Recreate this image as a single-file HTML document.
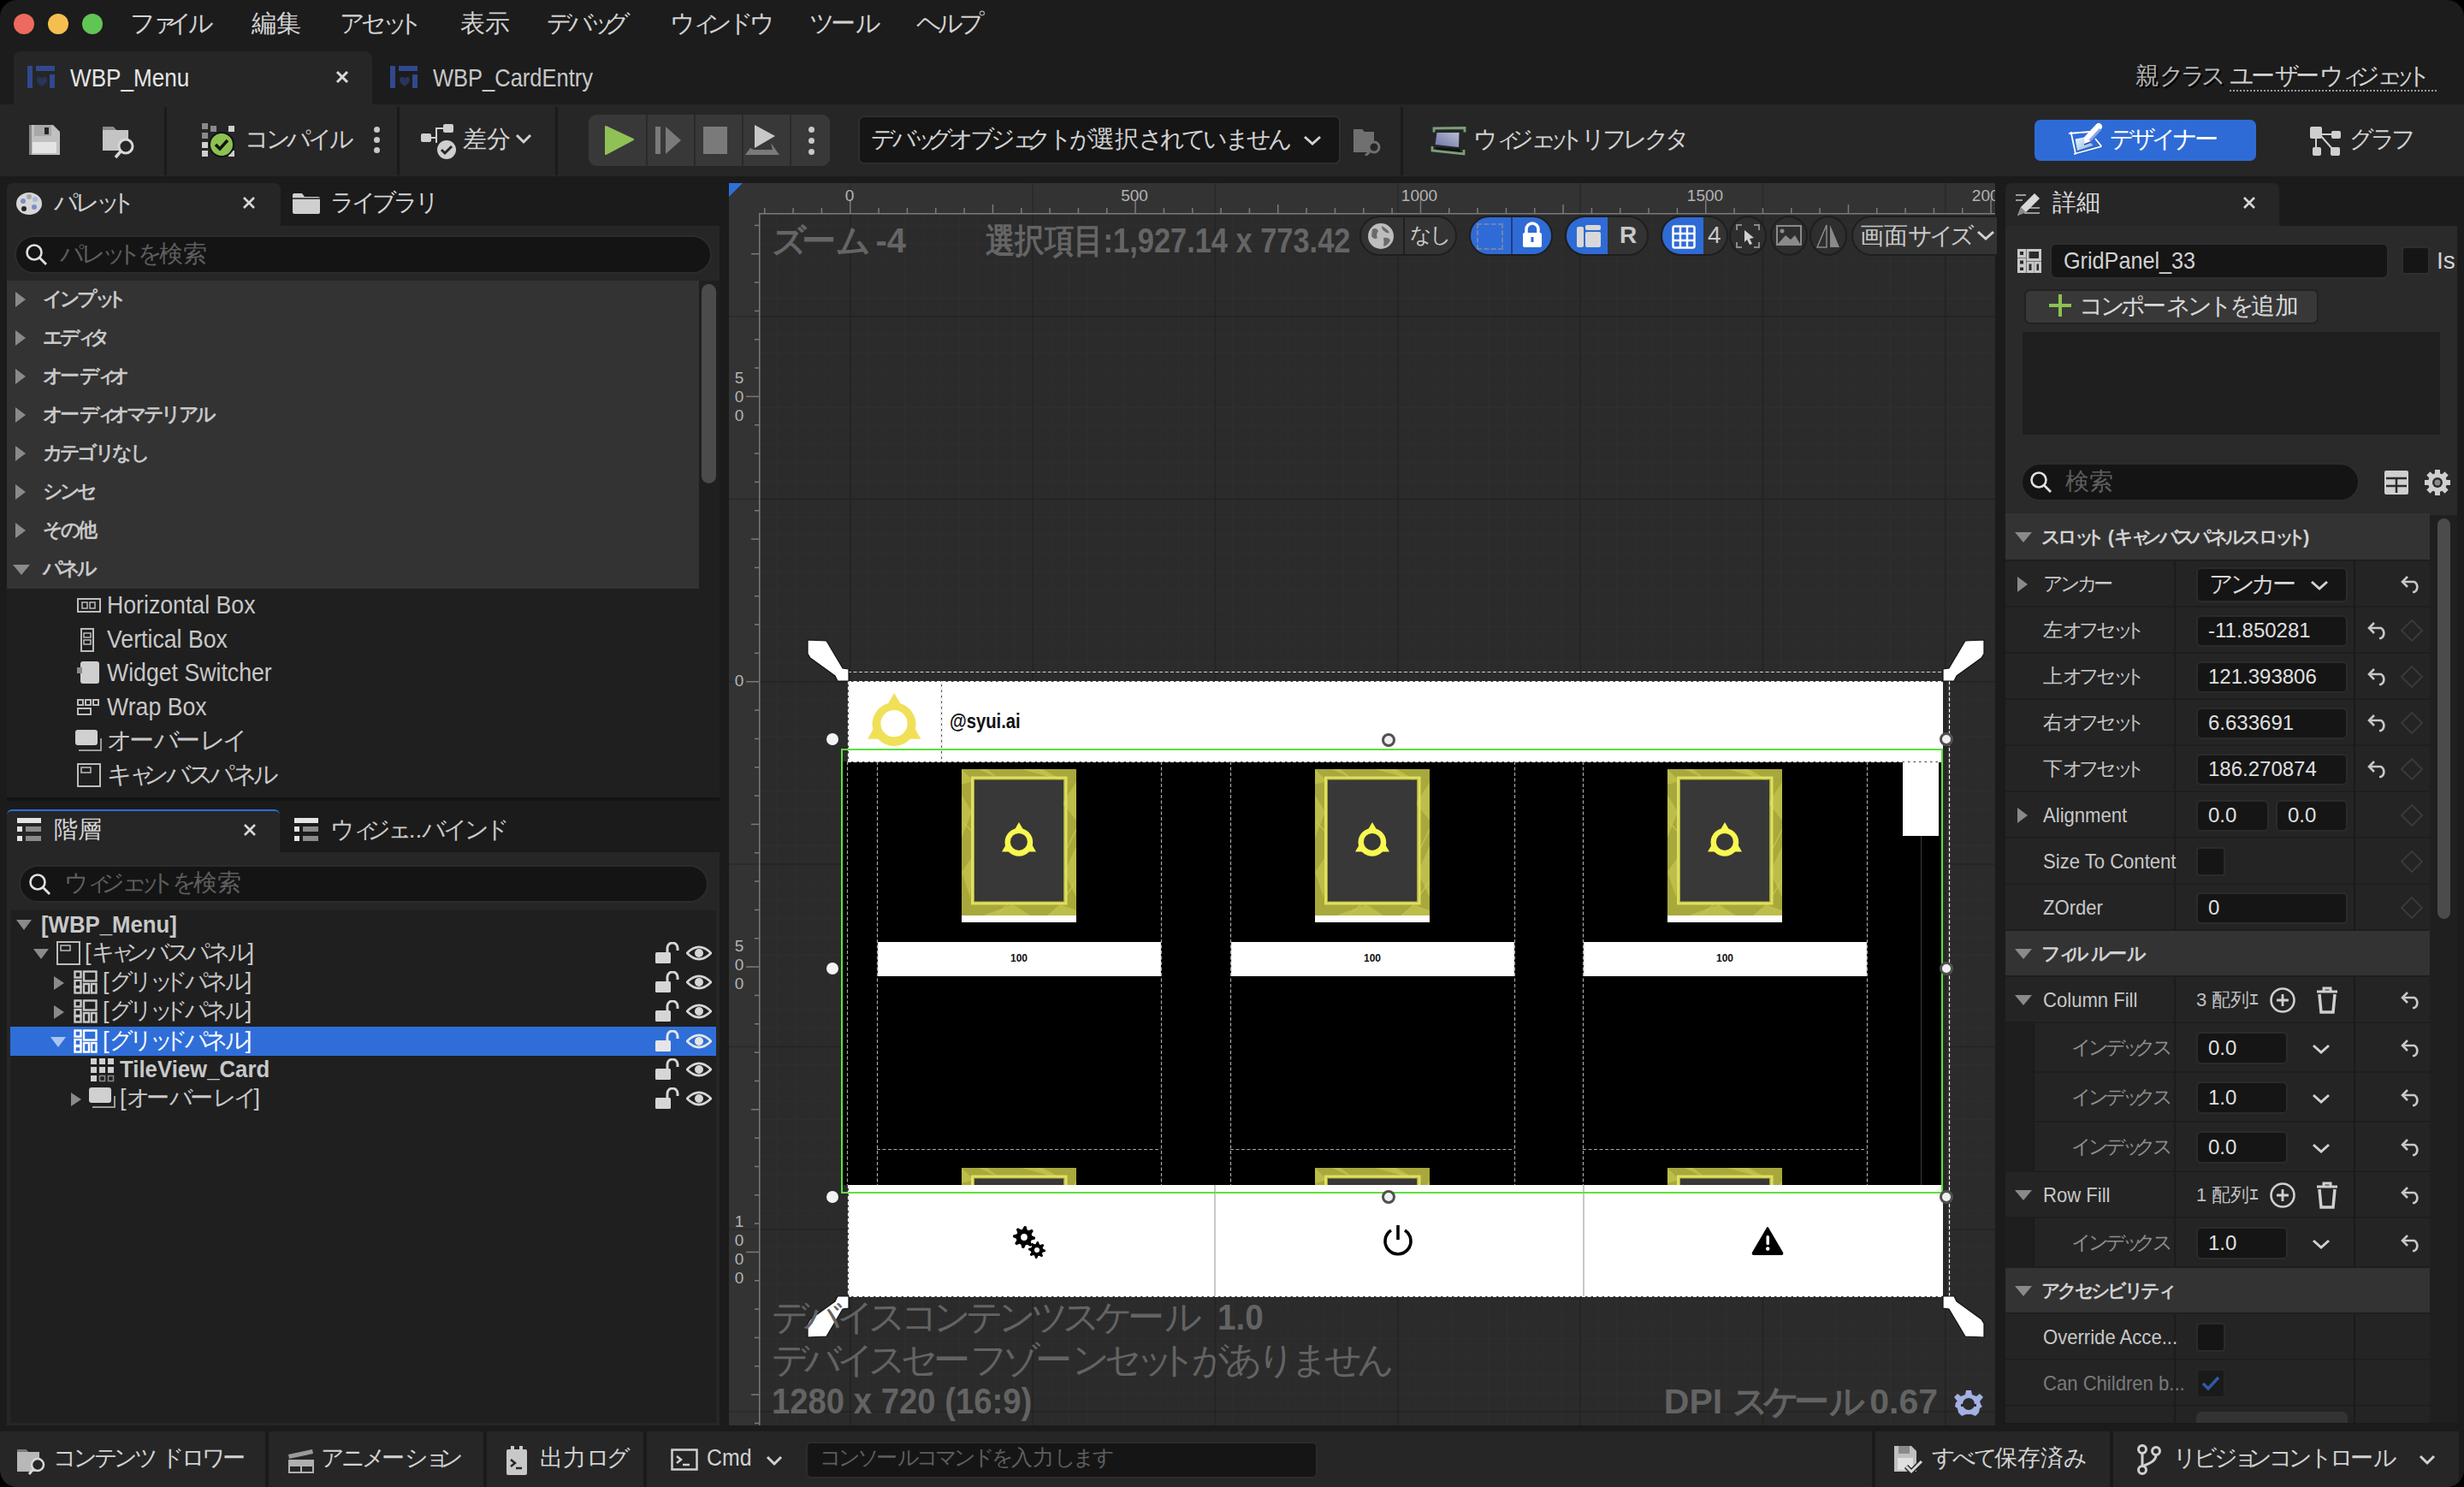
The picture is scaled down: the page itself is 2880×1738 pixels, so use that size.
<!DOCTYPE html><html><head><meta charset="utf-8"><style>
html,body{margin:0;padding:0;}
body{width:2880px;height:1738px;overflow:hidden;position:relative;background:#1b1b1b;font-family:"Liberation Sans",sans-serif;}
div,svg{position:absolute;box-sizing:border-box;}
.t{white-space:nowrap;line-height:1.1;}
.t i{display:inline-block;font-style:normal;text-align:center;}
i.k{width:.88em}i.s{width:.62em}i.h{width:1em}i.g{width:.9em}i.p{width:.5em}
</style></head><body>
<div style="left:0px;top:0px;width:2880px;height:122px;background:#1c1c1c;"></div>
<div style="left:16px;top:16px;width:24px;height:24px;background:#ed6a5e;border-radius:50%;"></div>
<div style="left:56px;top:16px;width:24px;height:24px;background:#f5bf4f;border-radius:50%;"></div>
<div style="left:96px;top:16px;width:24px;height:24px;background:#61c554;border-radius:50%;"></div>
<div class="t" style="left:152px;top:12.3px;font-size:28.5px;color:#d2d2d2;font-weight:400;"><i class="k">フ</i><i class="s">ァ</i><i class="k">イ</i><i class="k">ル</i></div>
<div class="t" style="left:294px;top:12.3px;font-size:28.5px;color:#d2d2d2;font-weight:400;"><i class="h">編</i><i class="h">集</i></div>
<div class="t" style="left:397px;top:12.3px;font-size:28.5px;color:#d2d2d2;font-weight:400;"><i class="k">ア</i><i class="k">セ</i><i class="s">ッ</i><i class="k">ト</i></div>
<div class="t" style="left:538px;top:12.3px;font-size:28.5px;color:#d2d2d2;font-weight:400;"><i class="h">表</i><i class="h">示</i></div>
<div class="t" style="left:639px;top:12.3px;font-size:28.5px;color:#d2d2d2;font-weight:400;"><i class="k">デ</i><i class="k">バ</i><i class="s">ッ</i><i class="k">グ</i></div>
<div class="t" style="left:783px;top:12.3px;font-size:28.5px;color:#d2d2d2;font-weight:400;"><i class="k">ウ</i><i class="s">ィ</i><i class="k">ン</i><i class="k">ド</i><i class="k">ウ</i></div>
<div class="t" style="left:946px;top:12.3px;font-size:28.5px;color:#d2d2d2;font-weight:400;"><i class="k">ツ</i><i class="h">ー</i><i class="k">ル</i></div>
<div class="t" style="left:1071px;top:12.3px;font-size:28.5px;color:#d2d2d2;font-weight:400;"><i class="k">ヘ</i><i class="k">ル</i><i class="k">プ</i></div>
<div style="left:16px;top:60px;width:419px;height:62px;background:#262626;border-radius:8px 8px 0 0;"></div>
<svg style="left:32px;top:77px;" width="34" height="28" viewBox="0 0 34 28"><rect x="0" y="0" width="6" height="26" fill="#30488e"/><rect x="10" y="0" width="22" height="6" fill="#30488e"/><rect x="26" y="10" width="6" height="16" fill="#30488e"/><path d="M11 17 q0 -4 3 -4 q3 0 3 3 q0 -3 3 -3 q3 0 3 4 q0 3 -6 7 q-6 -4 -6 -7z" fill="#28355a"/></svg>
<div class="t" style="left:82px;top:73.5px;font-size:30px;color:#e6e6e6;font-weight:400;transform:scaleX(0.87);transform-origin:left;">WBP_Menu</div>
<svg style="left:391px;top:81px;" width="18" height="18" viewBox="0 0 18 18"><path d="M3 3 L15 15 M15 3 L3 15" stroke="#d8d8d8" stroke-width="3"/></svg>
<svg style="left:456px;top:77px;" width="34" height="28" viewBox="0 0 34 28"><rect x="0" y="0" width="6" height="26" fill="#30488e"/><rect x="10" y="0" width="22" height="6" fill="#30488e"/><rect x="26" y="10" width="6" height="16" fill="#30488e"/><path d="M11 17 q0 -4 3 -4 q3 0 3 3 q0 -3 3 -3 q3 0 3 4 q0 3 -6 7 q-6 -4 -6 -7z" fill="#28355a"/></svg>
<div class="t" style="left:506px;top:73.5px;font-size:30px;color:#c8c8c8;font-weight:400;transform:scaleX(0.85);transform-origin:left;">WBP_CardEntry</div>
<div class="t" style="left:2496px;top:73.6px;font-size:28px;color:#b4b4b4;font-weight:400;text-shadow:2px 2px 1px #000;"><i class="h">親</i><i class="k">ク</i><i class="k">ラ</i><i class="k">ス</i></div>
<div class="t" style="left:2606px;top:73.6px;font-size:28px;color:#d2d2d2;font-weight:400;"><i class="k">ユ</i><i class="h">ー</i><i class="k">ザ</i><i class="h">ー</i><i class="k">ウ</i><i class="s">ィ</i><i class="k">ジ</i><i class="s">ェ</i><i class="s">ッ</i><i class="k">ト</i></div>
<div style="left:2606px;top:105px;width:242px;height:2px;border-top:2px dotted #9a9a9a;"></div>
<div style="left:0px;top:122px;width:2880px;height:84px;background:#262626;"></div>
<svg style="left:34px;top:146px;" width="36" height="35" viewBox="0 0 36 35"><path d="M0 0 H28 L36 8 V35 H0 Z" fill="#c0c0c0"/><rect x="4" y="20" width="28" height="13" fill="#e4e4e4"/><rect x="6" y="0" width="20" height="13" fill="#a8a8a8"/><rect x="18" y="3" width="5" height="8" fill="#262626"/><rect x="0" y="0" width="3" height="35" fill="#888"/></svg>
<svg style="left:120px;top:144px;" width="40" height="42" viewBox="0 0 40 42"><path d="M0 4 H12 L16 8 H30 V32 H0 Z" fill="#c4c4c4"/><path d="M0 4 H12 L16 8 H0Z" fill="#8a8a8a"/><circle cx="27" cy="27" r="8" fill="#262626" stroke="#d8d8d8" stroke-width="3"/><path d="M21 33 L15 40" stroke="#d8d8d8" stroke-width="3.5"/></svg>
<div style="left:192px;top:125px;width:3px;height:80px;background:#1a1a1a;"></div>
<div style="left:464px;top:125px;width:3px;height:80px;background:#1a1a1a;"></div>
<div style="left:649px;top:125px;width:3px;height:80px;background:#1a1a1a;"></div>
<div style="left:1637px;top:125px;width:3px;height:80px;background:#1a1a1a;"></div>
<svg style="left:236px;top:144px;" width="42" height="42" viewBox="0 0 42 42"><g fill="#cfcfcf"><rect x="0" y="0" width="7" height="7" fill="#8a8a8a"/><rect x="10" y="3" width="7" height="7" fill="#8a8a8a"/><rect x="31" y="3" width="7" height="7"/><rect x="0" y="11" width="7" height="7" fill="#8a8a8a"/><rect x="0" y="22" width="7" height="7"/><rect x="0" y="32" width="7" height="7"/><rect x="31" y="32" width="7" height="7"/></g><circle cx="23" cy="25" r="14" fill="#8cc152" stroke="#111" stroke-width="2"/><path d="M16 25 L21 30 L30 20" stroke="#111" stroke-width="3.5" fill="none"/></svg>
<div class="t" style="left:286px;top:147.6px;font-size:28px;color:#d2d2d2;font-weight:400;"><i class="k">コ</i><i class="k">ン</i><i class="k">パ</i><i class="k">イ</i><i class="k">ル</i></div>
<div style="left:437px;top:148px;width:7px;height:7px;background:#c8c8c8;border-radius:50%;"></div>
<div style="left:437px;top:160px;width:7px;height:7px;background:#c8c8c8;border-radius:50%;"></div>
<div style="left:437px;top:172px;width:7px;height:7px;background:#c8c8c8;border-radius:50%;"></div>
<svg style="left:492px;top:145px;" width="42" height="42" viewBox="0 0 42 42"><rect x="0" y="11" width="12" height="10" rx="2" fill="#cfcfcf"/><rect x="26" y="0" width="12" height="10" rx="2" fill="#cfcfcf"/><path d="M12 16 H18 V5 H26 M18 16 V22" stroke="#cfcfcf" stroke-width="2" fill="none"/><circle cx="30" cy="30" r="11" fill="#cfcfcf"/><path d="M24 30 L28 34 L36 26" stroke="#262626" stroke-width="3" fill="none"/></svg>
<div class="t" style="left:541px;top:147.6px;font-size:28px;color:#d2d2d2;font-weight:400;"><i class="h">差</i><i class="h">分</i></div>
<svg style="left:602px;top:155px;" width="20" height="14" viewBox="0 0 20 14"><path d="M2 3 L10 11 L18 3" stroke="#d2d2d2" stroke-width="3" fill="none"/></svg>
<div style="left:688px;top:134px;width:282px;height:60px;background:#383838;border-radius:9px;"></div>
<div style="left:755px;top:134px;width:2px;height:60px;background:#2a2a2a;"></div>
<div style="left:811px;top:134px;width:2px;height:60px;background:#2a2a2a;"></div>
<div style="left:867px;top:134px;width:2px;height:60px;background:#2a2a2a;"></div>
<div style="left:923px;top:134px;width:2px;height:60px;background:#2a2a2a;"></div>
<svg style="left:707px;top:146px;" width="34" height="36" viewBox="0 0 34 36"><path d="M1 2 L33 17 L1 34 Z" fill="#8fc157" stroke="#8fc157" stroke-width="2" stroke-linejoin="round"/></svg>
<svg style="left:765px;top:147px;" width="34" height="34" viewBox="0 0 34 34"><rect x="1" y="1" width="6" height="32" fill="#7a7a7a"/><path d="M13 1 L31 17 L13 33Z" fill="#7a7a7a"/></svg>
<div style="left:822px;top:148px;width:28px;height:32px;background:#7a7a7a;"></div>
<svg style="left:871px;top:145px;" width="44" height="40" viewBox="0 0 44 40"><path d="M11 1 L35 14 L11 28Z" fill="#c8c8c8"/><path d="M6 28 L0 36 H40 L30 22 L32 30 H10Z" fill="#7a7a7a"/></svg>
<div style="left:945px;top:148px;width:7px;height:7px;background:#c8c8c8;border-radius:50%;"></div>
<div style="left:945px;top:161px;width:7px;height:7px;background:#c8c8c8;border-radius:50%;"></div>
<div style="left:945px;top:174px;width:7px;height:7px;background:#c8c8c8;border-radius:50%;"></div>
<div style="left:1003px;top:135px;width:564px;height:57px;background:#151515;border:2px solid #2e2e2e;border-radius:7px;"></div>
<div class="t" style="left:1018px;top:147.6px;font-size:28px;color:#d2d2d2;font-weight:400;"><i class="k">デ</i><i class="k">バ</i><i class="s">ッ</i><i class="k">グ</i><i class="k">オ</i><i class="k">ブ</i><i class="k">ジ</i><i class="s">ェ</i><i class="k">ク</i><i class="k">ト</i><i class="g">が</i><i class="h">選</i><i class="h">択</i><i class="g">さ</i><i class="g">れ</i><i class="g">て</i><i class="g">い</i><i class="g">ま</i><i class="g">せ</i><i class="g">ん</i></div>
<svg style="left:1523px;top:157px;" width="22" height="14" viewBox="0 0 22 14"><path d="M2 3 L11 11 L20 3" stroke="#d2d2d2" stroke-width="3" fill="none"/></svg>
<svg style="left:1582px;top:148px;" width="34" height="34" viewBox="0 0 34 34"><path d="M0 3 H10 L13 6 H24 V30 H0Z" fill="#707070"/><circle cx="24" cy="24" r="6" fill="#262626" stroke="#707070" stroke-width="3"/><path d="M19 29 L14 34" stroke="#707070" stroke-width="3"/></svg>
<svg style="left:1670px;top:145px;" width="46" height="40" viewBox="0 0 46 40"><defs><linearGradient id="rg" x1="0" y1="1" x2="1" y2="0"><stop offset="0" stop-color="#6c74a8"/><stop offset="1" stop-color="#b8bcd0"/></linearGradient></defs><path d="M9 27 L36 29 L37 33 L8 32Z" fill="#111"/><path d="M6 9.5 V5 L42 4.5 V9.5" fill="none" stroke="#7a9e78" stroke-width="2.8"/><path d="M9.5 10 L35.5 10 L35 27 L7.5 24Z" fill="url(#rg)"/><path d="M4 26 V31 L41 35 V30" fill="none" stroke="#7a9e78" stroke-width="2.8"/></svg>
<div class="t" style="left:1722px;top:147.6px;font-size:28px;color:#d2d2d2;font-weight:400;"><i class="k">ウ</i><i class="s">ィ</i><i class="k">ジ</i><i class="s">ェ</i><i class="s">ッ</i><i class="k">ト</i><i class="k">リ</i><i class="k">フ</i><i class="k">レ</i><i class="k">ク</i><i class="k">タ</i></div>
<div style="left:2378px;top:140px;width:259px;height:48px;background:#2f6bd6;border-radius:7px;"></div>
<svg style="left:2414px;top:143px;" width="46" height="42" viewBox="0 0 46 42"><defs><linearGradient id="dg" x1="0" y1="0" x2="1" y2="1"><stop offset="0" stop-color="#e8fbff"/><stop offset="1" stop-color="#8fb0e0"/></linearGradient></defs><path d="M14 36 L42 28 L36 19" fill="none" stroke="#1f4fa0" stroke-width="3" opacity="0.6"/><path d="M4 13 L29 11 M6.5 11 L12.2 37.5 M10 37 L42.4 28.1 M35 19 L42.4 28.1" fill="none" stroke="#ffffff" stroke-width="1.8"/><path d="M11.6 19.6 L24 17 L32.5 27 L14 33Z" fill="url(#dg)"/><path d="M26 19 L39 5" stroke="#ffffff" stroke-width="8" stroke-linecap="round"/><path d="M28.5 21.5 L41 8" stroke="#8aa4e8" stroke-width="3"/><path d="M22 26 L23 18 L30 23Z" fill="#ffffff"/><path d="M22 26 L30 23" stroke="#3040a0" stroke-width="1.5"/></svg>
<div class="t" style="left:2466px;top:147.6px;font-size:28px;color:#ffffff;font-weight:400;"><i class="k">デ</i><i class="k">ザ</i><i class="k">イ</i><i class="k">ナ</i><i class="h">ー</i></div>
<svg style="left:2700px;top:148px;" width="36" height="34" viewBox="0 0 36 34"><rect x="0" y="0" width="14" height="14" rx="2" fill="#cfcfcf"/><rect x="25" y="5" width="11" height="9" rx="2" fill="#cfcfcf"/><rect x="3" y="24" width="10" height="10" rx="2" fill="#cfcfcf"/><rect x="24" y="24" width="11" height="10" rx="2" fill="#cfcfcf"/><path d="M7 14 V26 M12 10 L27 27 M14 9 H26" stroke="#cfcfcf" stroke-width="2"/></svg>
<div class="t" style="left:2746px;top:147.6px;font-size:28px;color:#d2d2d2;font-weight:400;"><i class="k">グ</i><i class="k">ラ</i><i class="k">フ</i></div>
<div style="left:0px;top:206px;width:2880px;height:1532px;background:#1b1b1b;"></div>
<div style="left:8px;top:214px;width:320px;height:50px;background:#262626;border-radius:7px 7px 0 0;"></div>
<svg style="left:18px;top:222px;" width="34" height="32" viewBox="0 0 34 32"><ellipse cx="16" cy="16" rx="15" ry="13" fill="#d6d6d6"/><circle cx="9" cy="13" r="3" fill="#7a8fc4"/><circle cx="16" cy="8" r="3" fill="#a8a8a8"/><circle cx="23" cy="11" r="3" fill="#a8b8e0"/><circle cx="22" cy="20" r="3" fill="#7a8fc4"/><circle cx="10" cy="22" r="3" fill="#262626"/></svg>
<div class="t" style="left:63px;top:221.6px;font-size:28px;color:#d2d2d2;font-weight:400;"><i class="k">パ</i><i class="k">レ</i><i class="s">ッ</i><i class="k">ト</i></div>
<svg style="left:283px;top:229px;" width="16" height="16" viewBox="0 0 16 16"><path d="M2 2 L14 14 M14 2 L2 14" stroke="#d8d8d8" stroke-width="2.6"/></svg>
<svg style="left:342px;top:226px;" width="32" height="24" viewBox="0 0 32 24"><path d="M0 2 Q0 0 2 0 H11 L14 4 H30 Q32 4 32 6 V22 Q32 24 30 24 H2 Q0 24 0 22Z" fill="#cfcfcf"/><path d="M0 6 H32" stroke="#1c1c1c" stroke-width="1.5"/></svg>
<div class="t" style="left:386px;top:221.6px;font-size:28px;color:#d2d2d2;font-weight:400;"><i class="k">ラ</i><i class="k">イ</i><i class="k">ブ</i><i class="k">ラ</i><i class="k">リ</i></div>
<div style="left:8px;top:264px;width:833px;height:64px;background:#262626;"></div>
<div style="left:17px;top:275px;width:815px;height:45px;background:#141414;border:2px solid #2c2c2c;border-radius:23px;"></div>
<svg style="left:29px;top:284px;" width="27" height="27" viewBox="0 0 27 27"><circle cx="11" cy="11" r="8.5" fill="none" stroke="#e0e0e0" stroke-width="2.6"/><path d="M17 17 L25 25" stroke="#e0e0e0" stroke-width="2.8"/></svg>
<div class="t" style="left:70px;top:281.6px;font-size:28px;color:#5e5e5e;font-weight:400;"><i class="k">パ</i><i class="k">レ</i><i class="s">ッ</i><i class="k">ト</i><i class="g">を</i><i class="h">検</i><i class="h">索</i></div>
<div style="left:8px;top:328px;width:809px;height:360px;background:#333333;"></div>
<div style="left:817px;top:328px;width:24px;height:360px;background:#1f1f1f;"></div>
<div style="left:820px;top:332px;width:17px;height:233px;background:#4b4b4b;border-radius:9px;"></div>
<svg style="left:17px;top:340px;" width="14" height="20" viewBox="0 0 14 20"><path d="M1 1 L13 10 L1 19Z" fill="#8a8a8a"/></svg>
<div class="t" style="left:50px;top:337.4px;font-size:23px;color:#c8c8c8;font-weight:700;"><i class="k">イ</i><i class="k">ン</i><i class="k">プ</i><i class="s">ッ</i><i class="k">ト</i></div>
<svg style="left:17px;top:385px;" width="14" height="20" viewBox="0 0 14 20"><path d="M1 1 L13 10 L1 19Z" fill="#8a8a8a"/></svg>
<div class="t" style="left:50px;top:382.4px;font-size:23px;color:#c8c8c8;font-weight:700;"><i class="k">エ</i><i class="k">デ</i><i class="s">ィ</i><i class="k">タ</i></div>
<svg style="left:17px;top:430px;" width="14" height="20" viewBox="0 0 14 20"><path d="M1 1 L13 10 L1 19Z" fill="#8a8a8a"/></svg>
<div class="t" style="left:50px;top:427.4px;font-size:23px;color:#c8c8c8;font-weight:700;"><i class="k">オ</i><i class="h">ー</i><i class="k">デ</i><i class="s">ィ</i><i class="k">オ</i></div>
<svg style="left:17px;top:475px;" width="14" height="20" viewBox="0 0 14 20"><path d="M1 1 L13 10 L1 19Z" fill="#8a8a8a"/></svg>
<div class="t" style="left:50px;top:472.4px;font-size:23px;color:#c8c8c8;font-weight:700;"><i class="k">オ</i><i class="h">ー</i><i class="k">デ</i><i class="s">ィ</i><i class="k">オ</i><i class="k">マ</i><i class="k">テ</i><i class="k">リ</i><i class="k">ア</i><i class="k">ル</i></div>
<svg style="left:17px;top:520px;" width="14" height="20" viewBox="0 0 14 20"><path d="M1 1 L13 10 L1 19Z" fill="#8a8a8a"/></svg>
<div class="t" style="left:50px;top:517.4px;font-size:23px;color:#c8c8c8;font-weight:700;"><i class="k">カ</i><i class="k">テ</i><i class="k">ゴ</i><i class="k">リ</i><i class="g">な</i><i class="g">し</i></div>
<svg style="left:17px;top:565px;" width="14" height="20" viewBox="0 0 14 20"><path d="M1 1 L13 10 L1 19Z" fill="#8a8a8a"/></svg>
<div class="t" style="left:50px;top:562.4px;font-size:23px;color:#c8c8c8;font-weight:700;"><i class="k">シ</i><i class="k">ン</i><i class="k">セ</i></div>
<svg style="left:17px;top:610px;" width="14" height="20" viewBox="0 0 14 20"><path d="M1 1 L13 10 L1 19Z" fill="#8a8a8a"/></svg>
<div class="t" style="left:50px;top:607.4px;font-size:23px;color:#c8c8c8;font-weight:700;"><i class="g">そ</i><i class="g">の</i><i class="h">他</i></div>
<svg style="left:14px;top:659px;" width="22" height="14" viewBox="0 0 22 14"><path d="M1 1 H21 L11 13Z" fill="#8a8a8a"/></svg>
<div class="t" style="left:50px;top:652.4px;font-size:23px;color:#c8c8c8;font-weight:700;"><i class="k">パ</i><i class="k">ネ</i><i class="k">ル</i></div>
<div style="left:8px;top:688px;width:833px;height:247px;background:#1f1f1f;"></div>
<svg style="left:90px;top:699.0px;" width="28" height="18" viewBox="0 0 28 18"><rect x="1" y="1" width="26" height="15" fill="none" stroke="#bdbdbd" stroke-width="2"/><rect x="6" y="5" width="6" height="7" fill="none" stroke="#bdbdbd" stroke-width="1.5"/><rect x="15" y="5" width="6" height="7" fill="none" stroke="#bdbdbd" stroke-width="1.5"/></svg>
<div class="t" style="left:125px;top:692.0px;font-size:29px;color:#c8c8c8;font-weight:400;transform:scaleX(0.92);transform-origin:left;">Horizontal Box</div>
<svg style="left:94px;top:733.6px;" width="18" height="28" viewBox="0 0 18 28"><rect x="1" y="1" width="14" height="26" fill="none" stroke="#bdbdbd" stroke-width="2"/><rect x="4" y="6" width="8" height="5" fill="none" stroke="#bdbdbd" stroke-width="1.5"/><rect x="4" y="14" width="8" height="5" fill="none" stroke="#bdbdbd" stroke-width="1.5"/></svg>
<div class="t" style="left:125px;top:731.6px;font-size:29px;color:#c8c8c8;font-weight:400;transform:scaleX(0.92);transform-origin:left;">Vertical Box</div>
<svg style="left:90px;top:773.2px;" width="28" height="27" viewBox="0 0 28 27"><rect x="4" y="0" width="22" height="26" rx="3" fill="#cfcfcf"/><rect x="0" y="7" width="6" height="7" fill="#8a8a8a"/></svg>
<div class="t" style="left:125px;top:771.2px;font-size:29px;color:#c8c8c8;font-weight:400;transform:scaleX(0.92);transform-origin:left;">Widget Switcher</div>
<svg style="left:90px;top:816.8px;" width="28" height="20" viewBox="0 0 28 20"><g fill="none" stroke="#bdbdbd" stroke-width="2"><rect x="1" y="1" width="6" height="6"/><rect x="10" y="1" width="6" height="6"/><rect x="19" y="1" width="6" height="6"/><rect x="1" y="11" width="15" height="7"/></g></svg>
<div class="t" style="left:125px;top:810.8px;font-size:29px;color:#c8c8c8;font-weight:400;transform:scaleX(0.92);transform-origin:left;">Wrap Box</div>
<svg style="left:88px;top:853.4px;" width="32" height="28" viewBox="0 0 32 28"><rect x="0" y="0" width="26" height="18" rx="3" fill="#d0d0d0"/><path d="M4 24 H30 V10" fill="none" stroke="#9a9a9a" stroke-width="2"/></svg>
<div class="t" style="left:125px;top:850.4px;font-size:29px;color:#c8c8c8;font-weight:400;"><i class="k">オ</i><i class="h">ー</i><i class="k">バ</i><i class="h">ー</i><i class="k">レ</i><i class="k">イ</i></div>
<svg style="left:90px;top:892.0px;" width="28" height="28" viewBox="0 0 28 28"><rect x="1" y="1" width="26" height="26" fill="none" stroke="#bdbdbd" stroke-width="2"/><rect x="5" y="5" width="11" height="6" fill="none" stroke="#bdbdbd" stroke-width="1.5"/></svg>
<div class="t" style="left:125px;top:890.0px;font-size:29px;color:#c8c8c8;font-weight:400;"><i class="k">キ</i><i class="s">ャ</i><i class="k">ン</i><i class="k">バ</i><i class="k">ス</i><i class="k">パ</i><i class="k">ネ</i><i class="k">ル</i></div>
<div style="left:8px;top:925px;width:833px;height:10px;background:#1f1f1f;"></div>
<div style="left:8px;top:932px;width:833px;height:4px;background:#141414;"></div>
<div style="left:8px;top:946px;width:319px;height:50px;background:#262626;border-radius:6px 6px 0 0;border-top:2px solid #2f6bd6;"></div>
<svg style="left:20px;top:956px;" width="28" height="28" viewBox="0 0 28 28"><rect x="0" y="0" width="28" height="6" fill="#e4e4e4"/><rect x="0" y="10" width="6" height="6" fill="#e4e4e4"/><rect x="10" y="10" width="18" height="6" fill="#8a8a8a"/><rect x="0" y="21" width="6" height="6" fill="#e4e4e4"/><rect x="10" y="21" width="18" height="6" fill="#8a8a8a"/></svg>
<div class="t" style="left:63px;top:954.6px;font-size:28px;color:#d8d8d8;font-weight:400;"><i class="h">階</i><i class="h">層</i></div>
<svg style="left:284px;top:962px;" width="16" height="16" viewBox="0 0 16 16"><path d="M2 2 L14 14 M14 2 L2 14" stroke="#d8d8d8" stroke-width="2.6"/></svg>
<svg style="left:344px;top:956px;" width="28" height="28" viewBox="0 0 28 28"><rect x="0" y="0" width="28" height="6" fill="#e4e4e4"/><rect x="0" y="10" width="6" height="6" fill="#e4e4e4"/><rect x="10" y="10" width="18" height="6" fill="#8a8a8a"/><rect x="0" y="21" width="6" height="6" fill="#e4e4e4"/><rect x="10" y="21" width="18" height="6" fill="#8a8a8a"/></svg>
<div class="t" style="left:386px;top:954.6px;font-size:28px;color:#c8c8c8;font-weight:400;"><i class="k">ウ</i><i class="s">ィ</i><i class="k">ジ</i><i class="s">ェ</i>...<i class="k">バ</i><i class="k">イ</i><i class="k">ン</i><i class="k">ド</i></div>
<div style="left:8px;top:996px;width:833px;height:66px;background:#262626;"></div>
<div style="left:22px;top:1011px;width:806px;height:44px;background:#141414;border:2px solid #2c2c2c;border-radius:22px;"></div>
<svg style="left:33px;top:1020px;" width="27" height="27" viewBox="0 0 27 27"><circle cx="11" cy="11" r="8.5" fill="none" stroke="#e0e0e0" stroke-width="2.6"/><path d="M17 17 L25 25" stroke="#e0e0e0" stroke-width="2.8"/></svg>
<div class="t" style="left:75px;top:1016.6px;font-size:28px;color:#5e5e5e;font-weight:400;"><i class="k">ウ</i><i class="s">ィ</i><i class="k">ジ</i><i class="s">ェ</i><i class="s">ッ</i><i class="k">ト</i><i class="g">を</i><i class="h">検</i><i class="h">索</i></div>
<div style="left:8px;top:1062px;width:833px;height:604px;background:#262626;"></div>
<div style="left:12px;top:1064px;width:825px;height:599px;background:#1f1f1f;"></div>
<div style="left:12px;top:1200px;width:825px;height:34px;background:#2f6ed9;"></div>
<svg style="left:18px;top:1074px;" width="20" height="14" viewBox="0 0 20 14"><path d="M1 1 H19 L10 13Z" fill="#8a8a8a"/></svg>
<div class="t" style="left:48px;top:1065.6px;font-size:28px;color:#c8c8c8;font-weight:700;transform:scaleX(0.92);transform-origin:left;">[WBP_Menu]</div>
<svg style="left:38px;top:1108px;" width="20" height="14" viewBox="0 0 20 14"><path d="M1 1 H19 L10 13Z" fill="#8a8a8a"/></svg>
<svg style="left:66px;top:1100px;" width="28" height="28" viewBox="0 0 28 28"><rect x="1" y="1" width="26" height="26" fill="none" stroke="#bdbdbd" stroke-width="2"/><rect x="5" y="5" width="11" height="6" fill="none" stroke="#bdbdbd" stroke-width="1.5"/></svg>
<div class="t" style="left:99px;top:1099.2px;font-size:27px;color:#c8c8c8;font-weight:400;">[<i class="k">キ</i><i class="s">ャ</i><i class="k">ン</i><i class="k">バ</i><i class="k">ス</i><i class="k">パ</i><i class="k">ネ</i><i class="k">ル</i>]</div>
<svg style="left:62px;top:1140px;" width="14" height="18" viewBox="0 0 14 18"><path d="M1 1 L13 9 L1 17Z" fill="#8a8a8a"/></svg>
<svg style="left:86px;top:1134px;" width="28" height="28" viewBox="0 0 28 28"><g fill="none" stroke="#c8c8c8" stroke-width="2.4"><rect x="1.5" y="1.5" width="7" height="7"/><rect x="12" y="1.5" width="14.5" height="11"/><rect x="1.5" y="12" width="7" height="7"/><rect x="1.5" y="20" width="7" height="6.5"/><rect x="12" y="16" width="6" height="10.5"/><rect x="21" y="16" width="5.5" height="10.5"/></g></svg>
<div class="t" style="left:120px;top:1133.2px;font-size:27px;color:#c8c8c8;font-weight:400;">[<i class="k">グ</i><i class="k">リ</i><i class="s">ッ</i><i class="k">ド</i><i class="k">パ</i><i class="k">ネ</i><i class="k">ル</i>]</div>
<svg style="left:62px;top:1174px;" width="14" height="18" viewBox="0 0 14 18"><path d="M1 1 L13 9 L1 17Z" fill="#8a8a8a"/></svg>
<svg style="left:86px;top:1168px;" width="28" height="28" viewBox="0 0 28 28"><g fill="none" stroke="#c8c8c8" stroke-width="2.4"><rect x="1.5" y="1.5" width="7" height="7"/><rect x="12" y="1.5" width="14.5" height="11"/><rect x="1.5" y="12" width="7" height="7"/><rect x="1.5" y="20" width="7" height="6.5"/><rect x="12" y="16" width="6" height="10.5"/><rect x="21" y="16" width="5.5" height="10.5"/></g></svg>
<div class="t" style="left:120px;top:1167.2px;font-size:27px;color:#c8c8c8;font-weight:400;">[<i class="k">グ</i><i class="k">リ</i><i class="s">ッ</i><i class="k">ド</i><i class="k">パ</i><i class="k">ネ</i><i class="k">ル</i>]</div>
<svg style="left:58px;top:1211px;" width="20" height="14" viewBox="0 0 20 14"><path d="M1 1 H19 L10 13Z" fill="#a9c6f0"/></svg>
<svg style="left:86px;top:1203px;" width="28" height="28" viewBox="0 0 28 28"><g fill="none" stroke="#ffffff" stroke-width="2.4"><rect x="1.5" y="1.5" width="7" height="7"/><rect x="12" y="1.5" width="14.5" height="11"/><rect x="1.5" y="12" width="7" height="7"/><rect x="1.5" y="20" width="7" height="6.5"/><rect x="12" y="16" width="6" height="10.5"/><rect x="21" y="16" width="5.5" height="10.5"/></g></svg>
<div class="t" style="left:120px;top:1202.2px;font-size:27px;color:#ffffff;font-weight:400;">[<i class="k">グ</i><i class="k">リ</i><i class="s">ッ</i><i class="k">ド</i><i class="k">パ</i><i class="k">ネ</i><i class="k">ル</i>]</div>
<svg style="left:106px;top:1237px;" width="28" height="28" viewBox="0 0 28 28"><g fill="#cfcfcf"><rect x="0" y="0" width="7" height="7"/><rect x="10" y="0" width="7" height="7"/><rect x="20" y="0" width="7" height="7"/><rect x="0" y="10" width="7" height="7"/><rect x="10" y="10" width="7" height="7"/><rect x="20" y="10" width="7" height="7"/><rect x="0" y="20" width="7" height="7"/></g><g fill="none" stroke="#8a8a8a" stroke-width="1.5"><rect x="10.5" y="20.5" width="6" height="6"/><rect x="20.5" y="20.5" width="6" height="6"/></g></svg>
<div class="t" style="left:140px;top:1234.6px;font-size:28px;color:#c8c8c8;font-weight:700;transform:scaleX(0.92);transform-origin:left;">TileView_Card</div>
<svg style="left:82px;top:1276px;" width="14" height="18" viewBox="0 0 14 18"><path d="M1 1 L13 9 L1 17Z" fill="#8a8a8a"/></svg>
<svg style="left:104px;top:1271px;" width="32" height="26" viewBox="0 0 32 26"><rect x="0" y="0" width="26" height="18" rx="3" fill="#d0d0d0"/><path d="M4 23 H30 V10" fill="none" stroke="#9a9a9a" stroke-width="2"/></svg>
<div class="t" style="left:140px;top:1269.2px;font-size:27px;color:#c8c8c8;font-weight:400;">[<i class="k">オ</i><i class="h">ー</i><i class="k">バ</i><i class="h">ー</i><i class="k">レ</i><i class="k">イ</i>]</div>
<svg style="left:766px;top:1101px;" width="28" height="26" viewBox="0 0 28 26"><rect x="0" y="12" width="18" height="13" rx="1.5" fill="#d6d6d6"/><path d="M14 12 V7 a6 6 0 0 1 12 0 V10" fill="none" stroke="#d6d6d6" stroke-width="3"/></svg>
<svg style="left:802px;top:1104px;" width="30" height="20" viewBox="0 0 30 20"><path d="M1 10 Q15 -4 29 10 Q15 24 1 10Z" fill="none" stroke="#d6d6d6" stroke-width="2.6"/><circle cx="15" cy="10" r="5" fill="#d6d6d6"/></svg>
<svg style="left:766px;top:1135px;" width="28" height="26" viewBox="0 0 28 26"><rect x="0" y="12" width="18" height="13" rx="1.5" fill="#d6d6d6"/><path d="M14 12 V7 a6 6 0 0 1 12 0 V10" fill="none" stroke="#d6d6d6" stroke-width="3"/></svg>
<svg style="left:802px;top:1138px;" width="30" height="20" viewBox="0 0 30 20"><path d="M1 10 Q15 -4 29 10 Q15 24 1 10Z" fill="none" stroke="#d6d6d6" stroke-width="2.6"/><circle cx="15" cy="10" r="5" fill="#d6d6d6"/></svg>
<svg style="left:766px;top:1169px;" width="28" height="26" viewBox="0 0 28 26"><rect x="0" y="12" width="18" height="13" rx="1.5" fill="#d6d6d6"/><path d="M14 12 V7 a6 6 0 0 1 12 0 V10" fill="none" stroke="#d6d6d6" stroke-width="3"/></svg>
<svg style="left:802px;top:1172px;" width="30" height="20" viewBox="0 0 30 20"><path d="M1 10 Q15 -4 29 10 Q15 24 1 10Z" fill="none" stroke="#d6d6d6" stroke-width="2.6"/><circle cx="15" cy="10" r="5" fill="#d6d6d6"/></svg>
<svg style="left:766px;top:1204px;" width="28" height="26" viewBox="0 0 28 26"><rect x="0" y="12" width="18" height="13" rx="1.5" fill="#e6e6e6"/><path d="M14 12 V7 a6 6 0 0 1 12 0 V10" fill="none" stroke="#e6e6e6" stroke-width="3"/></svg>
<svg style="left:802px;top:1207px;" width="30" height="20" viewBox="0 0 30 20"><path d="M1 10 Q15 -4 29 10 Q15 24 1 10Z" fill="none" stroke="#e6e6e6" stroke-width="2.6"/><circle cx="15" cy="10" r="5" fill="#e6e6e6"/></svg>
<svg style="left:766px;top:1237px;" width="28" height="26" viewBox="0 0 28 26"><rect x="0" y="12" width="18" height="13" rx="1.5" fill="#d6d6d6"/><path d="M14 12 V7 a6 6 0 0 1 12 0 V10" fill="none" stroke="#d6d6d6" stroke-width="3"/></svg>
<svg style="left:802px;top:1240px;" width="30" height="20" viewBox="0 0 30 20"><path d="M1 10 Q15 -4 29 10 Q15 24 1 10Z" fill="none" stroke="#d6d6d6" stroke-width="2.6"/><circle cx="15" cy="10" r="5" fill="#d6d6d6"/></svg>
<svg style="left:766px;top:1271px;" width="28" height="26" viewBox="0 0 28 26"><rect x="0" y="12" width="18" height="13" rx="1.5" fill="#d6d6d6"/><path d="M14 12 V7 a6 6 0 0 1 12 0 V10" fill="none" stroke="#d6d6d6" stroke-width="3"/></svg>
<svg style="left:802px;top:1274px;" width="30" height="20" viewBox="0 0 30 20"><path d="M1 10 Q15 -4 29 10 Q15 24 1 10Z" fill="none" stroke="#d6d6d6" stroke-width="2.6"/><circle cx="15" cy="10" r="5" fill="#d6d6d6"/></svg>
<div style="left:852px;top:214px;width:1482px;height:1452px;background:#2b2b2b;"></div>
<svg style="left:852px;top:214px;" width="1482" height="1452" viewBox="0 0 1482 1452"><rect x="55.7" y="0" width="1" height="1452" fill="#2f2f2f"/><rect x="77.0" y="0" width="1" height="1452" fill="#2f2f2f"/><rect x="98.3" y="0" width="1" height="1452" fill="#2f2f2f"/><rect x="119.7" y="0" width="1" height="1452" fill="#2f2f2f"/><rect x="141.0" y="0" width="1" height="1452" fill="#2f2f2f"/><rect x="162.3" y="0" width="1" height="1452" fill="#2f2f2f"/><rect x="183.7" y="0" width="1" height="1452" fill="#2f2f2f"/><rect x="205.0" y="0" width="1" height="1452" fill="#2f2f2f"/><rect x="226.3" y="0" width="1" height="1452" fill="#2f2f2f"/><rect x="247.7" y="0" width="1" height="1452" fill="#2f2f2f"/><rect x="269.0" y="0" width="1" height="1452" fill="#2f2f2f"/><rect x="290.3" y="0" width="1" height="1452" fill="#2f2f2f"/><rect x="311.7" y="0" width="1" height="1452" fill="#2f2f2f"/><rect x="333.0" y="0" width="1" height="1452" fill="#2f2f2f"/><rect x="354.3" y="0" width="1" height="1452" fill="#2f2f2f"/><rect x="375.7" y="0" width="1" height="1452" fill="#2f2f2f"/><rect x="397.0" y="0" width="1" height="1452" fill="#2f2f2f"/><rect x="418.3" y="0" width="1" height="1452" fill="#2f2f2f"/><rect x="439.7" y="0" width="1" height="1452" fill="#2f2f2f"/><rect x="461.0" y="0" width="1" height="1452" fill="#2f2f2f"/><rect x="482.3" y="0" width="1" height="1452" fill="#2f2f2f"/><rect x="503.7" y="0" width="1" height="1452" fill="#2f2f2f"/><rect x="525.0" y="0" width="1" height="1452" fill="#2f2f2f"/><rect x="546.3" y="0" width="1" height="1452" fill="#2f2f2f"/><rect x="567.7" y="0" width="1" height="1452" fill="#2f2f2f"/><rect x="589.0" y="0" width="1" height="1452" fill="#2f2f2f"/><rect x="610.3" y="0" width="1" height="1452" fill="#2f2f2f"/><rect x="631.7" y="0" width="1" height="1452" fill="#2f2f2f"/><rect x="653.0" y="0" width="1" height="1452" fill="#2f2f2f"/><rect x="674.3" y="0" width="1" height="1452" fill="#2f2f2f"/><rect x="695.7" y="0" width="1" height="1452" fill="#2f2f2f"/><rect x="717.0" y="0" width="1" height="1452" fill="#2f2f2f"/><rect x="738.3" y="0" width="1" height="1452" fill="#2f2f2f"/><rect x="759.7" y="0" width="1" height="1452" fill="#2f2f2f"/><rect x="781.0" y="0" width="1" height="1452" fill="#2f2f2f"/><rect x="802.3" y="0" width="1" height="1452" fill="#2f2f2f"/><rect x="823.7" y="0" width="1" height="1452" fill="#2f2f2f"/><rect x="845.0" y="0" width="1" height="1452" fill="#2f2f2f"/><rect x="866.3" y="0" width="1" height="1452" fill="#2f2f2f"/><rect x="887.7" y="0" width="1" height="1452" fill="#2f2f2f"/><rect x="909.0" y="0" width="1" height="1452" fill="#2f2f2f"/><rect x="930.3" y="0" width="1" height="1452" fill="#2f2f2f"/><rect x="951.7" y="0" width="1" height="1452" fill="#2f2f2f"/><rect x="973.0" y="0" width="1" height="1452" fill="#2f2f2f"/><rect x="994.3" y="0" width="1" height="1452" fill="#2f2f2f"/><rect x="1015.7" y="0" width="1" height="1452" fill="#2f2f2f"/><rect x="1037.0" y="0" width="1" height="1452" fill="#2f2f2f"/><rect x="1058.3" y="0" width="1" height="1452" fill="#2f2f2f"/><rect x="1079.7" y="0" width="1" height="1452" fill="#2f2f2f"/><rect x="1101.0" y="0" width="1" height="1452" fill="#2f2f2f"/><rect x="1122.3" y="0" width="1" height="1452" fill="#2f2f2f"/><rect x="1143.7" y="0" width="1" height="1452" fill="#2f2f2f"/><rect x="1165.0" y="0" width="1" height="1452" fill="#2f2f2f"/><rect x="1186.3" y="0" width="1" height="1452" fill="#2f2f2f"/><rect x="1207.7" y="0" width="1" height="1452" fill="#2f2f2f"/><rect x="1229.0" y="0" width="1" height="1452" fill="#2f2f2f"/><rect x="1250.3" y="0" width="1" height="1452" fill="#2f2f2f"/><rect x="1271.6" y="0" width="1" height="1452" fill="#2f2f2f"/><rect x="1293.0" y="0" width="1" height="1452" fill="#2f2f2f"/><rect x="1314.3" y="0" width="1" height="1452" fill="#2f2f2f"/><rect x="1335.6" y="0" width="1" height="1452" fill="#2f2f2f"/><rect x="1357.0" y="0" width="1" height="1452" fill="#2f2f2f"/><rect x="1378.3" y="0" width="1" height="1452" fill="#2f2f2f"/><rect x="1399.6" y="0" width="1" height="1452" fill="#2f2f2f"/><rect x="1421.0" y="0" width="1" height="1452" fill="#2f2f2f"/><rect x="1442.3" y="0" width="1" height="1452" fill="#2f2f2f"/><rect x="1463.6" y="0" width="1" height="1452" fill="#2f2f2f"/><rect x="0" y="48.7" width="1482" height="1" fill="#2f2f2f"/><rect x="0" y="70.0" width="1482" height="1" fill="#2f2f2f"/><rect x="0" y="91.3" width="1482" height="1" fill="#2f2f2f"/><rect x="0" y="112.7" width="1482" height="1" fill="#2f2f2f"/><rect x="0" y="134.0" width="1482" height="1" fill="#2f2f2f"/><rect x="0" y="155.3" width="1482" height="1" fill="#2f2f2f"/><rect x="0" y="176.7" width="1482" height="1" fill="#2f2f2f"/><rect x="0" y="198.0" width="1482" height="1" fill="#2f2f2f"/><rect x="0" y="219.3" width="1482" height="1" fill="#2f2f2f"/><rect x="0" y="240.7" width="1482" height="1" fill="#2f2f2f"/><rect x="0" y="262.0" width="1482" height="1" fill="#2f2f2f"/><rect x="0" y="283.3" width="1482" height="1" fill="#2f2f2f"/><rect x="0" y="304.7" width="1482" height="1" fill="#2f2f2f"/><rect x="0" y="326.0" width="1482" height="1" fill="#2f2f2f"/><rect x="0" y="347.3" width="1482" height="1" fill="#2f2f2f"/><rect x="0" y="368.7" width="1482" height="1" fill="#2f2f2f"/><rect x="0" y="390.0" width="1482" height="1" fill="#2f2f2f"/><rect x="0" y="411.3" width="1482" height="1" fill="#2f2f2f"/><rect x="0" y="432.7" width="1482" height="1" fill="#2f2f2f"/><rect x="0" y="454.0" width="1482" height="1" fill="#2f2f2f"/><rect x="0" y="475.3" width="1482" height="1" fill="#2f2f2f"/><rect x="0" y="496.7" width="1482" height="1" fill="#2f2f2f"/><rect x="0" y="518.0" width="1482" height="1" fill="#2f2f2f"/><rect x="0" y="539.3" width="1482" height="1" fill="#2f2f2f"/><rect x="0" y="560.7" width="1482" height="1" fill="#2f2f2f"/><rect x="0" y="582.0" width="1482" height="1" fill="#2f2f2f"/><rect x="0" y="603.3" width="1482" height="1" fill="#2f2f2f"/><rect x="0" y="624.7" width="1482" height="1" fill="#2f2f2f"/><rect x="0" y="646.0" width="1482" height="1" fill="#2f2f2f"/><rect x="0" y="667.3" width="1482" height="1" fill="#2f2f2f"/><rect x="0" y="688.7" width="1482" height="1" fill="#2f2f2f"/><rect x="0" y="710.0" width="1482" height="1" fill="#2f2f2f"/><rect x="0" y="731.3" width="1482" height="1" fill="#2f2f2f"/><rect x="0" y="752.7" width="1482" height="1" fill="#2f2f2f"/><rect x="0" y="774.0" width="1482" height="1" fill="#2f2f2f"/><rect x="0" y="795.3" width="1482" height="1" fill="#2f2f2f"/><rect x="0" y="816.7" width="1482" height="1" fill="#2f2f2f"/><rect x="0" y="838.0" width="1482" height="1" fill="#2f2f2f"/><rect x="0" y="859.3" width="1482" height="1" fill="#2f2f2f"/><rect x="0" y="880.7" width="1482" height="1" fill="#2f2f2f"/><rect x="0" y="902.0" width="1482" height="1" fill="#2f2f2f"/><rect x="0" y="923.3" width="1482" height="1" fill="#2f2f2f"/><rect x="0" y="944.7" width="1482" height="1" fill="#2f2f2f"/><rect x="0" y="966.0" width="1482" height="1" fill="#2f2f2f"/><rect x="0" y="987.3" width="1482" height="1" fill="#2f2f2f"/><rect x="0" y="1008.7" width="1482" height="1" fill="#2f2f2f"/><rect x="0" y="1030.0" width="1482" height="1" fill="#2f2f2f"/><rect x="0" y="1051.3" width="1482" height="1" fill="#2f2f2f"/><rect x="0" y="1072.7" width="1482" height="1" fill="#2f2f2f"/><rect x="0" y="1094.0" width="1482" height="1" fill="#2f2f2f"/><rect x="0" y="1115.3" width="1482" height="1" fill="#2f2f2f"/><rect x="0" y="1136.7" width="1482" height="1" fill="#2f2f2f"/><rect x="0" y="1158.0" width="1482" height="1" fill="#2f2f2f"/><rect x="0" y="1179.3" width="1482" height="1" fill="#2f2f2f"/><rect x="0" y="1200.7" width="1482" height="1" fill="#2f2f2f"/><rect x="0" y="1222.0" width="1482" height="1" fill="#2f2f2f"/><rect x="0" y="1243.3" width="1482" height="1" fill="#2f2f2f"/><rect x="0" y="1264.7" width="1482" height="1" fill="#2f2f2f"/><rect x="0" y="1286.0" width="1482" height="1" fill="#2f2f2f"/><rect x="0" y="1307.3" width="1482" height="1" fill="#2f2f2f"/><rect x="0" y="1328.7" width="1482" height="1" fill="#2f2f2f"/><rect x="0" y="1350.0" width="1482" height="1" fill="#2f2f2f"/><rect x="0" y="1371.3" width="1482" height="1" fill="#2f2f2f"/><rect x="0" y="1392.7" width="1482" height="1" fill="#2f2f2f"/><rect x="0" y="1414.0" width="1482" height="1" fill="#2f2f2f"/><rect x="0" y="1435.3" width="1482" height="1" fill="#2f2f2f"/><rect x="141.0" y="0" width="1.5" height="1452" fill="#232323"/><rect x="354.3" y="0" width="1.5" height="1452" fill="#232323"/><rect x="567.7" y="0" width="1.5" height="1452" fill="#232323"/><rect x="781.0" y="0" width="1.5" height="1452" fill="#232323"/><rect x="994.3" y="0" width="1.5" height="1452" fill="#232323"/><rect x="1207.7" y="0" width="1.5" height="1452" fill="#232323"/><rect x="1421.0" y="0" width="1.5" height="1452" fill="#232323"/><rect x="0" y="155.3" width="1482" height="1.5" fill="#232323"/><rect x="0" y="368.7" width="1482" height="1.5" fill="#232323"/><rect x="0" y="582.0" width="1482" height="1.5" fill="#232323"/><rect x="0" y="795.3" width="1482" height="1.5" fill="#232323"/><rect x="0" y="1008.7" width="1482" height="1.5" fill="#232323"/><rect x="0" y="1222.0" width="1482" height="1.5" fill="#232323"/><rect x="0" y="1435.3" width="1482" height="1.5" fill="#232323"/></svg>
<svg style="left:852px;top:214px;" width="1482" height="1452" viewBox="0 0 1482 1452"><rect x="0" y="0" width="1482" height="35" fill="#333333"/><rect x="0" y="0" width="36" height="1452" fill="#333333"/><rect x="141.0" y="0" width="1.5" height="35" fill="#2a2a2a"/><rect x="354.3" y="0" width="1.5" height="35" fill="#2a2a2a"/><rect x="567.7" y="0" width="1.5" height="35" fill="#2a2a2a"/><rect x="781.0" y="0" width="1.5" height="35" fill="#2a2a2a"/><rect x="994.3" y="0" width="1.5" height="35" fill="#2a2a2a"/><rect x="1207.7" y="0" width="1.5" height="35" fill="#2a2a2a"/><rect x="1421.0" y="0" width="1.5" height="35" fill="#2a2a2a"/><rect x="0" y="155.3" width="36" height="1.5" fill="#2a2a2a"/><rect x="0" y="368.7" width="36" height="1.5" fill="#2a2a2a"/><rect x="0" y="582.0" width="36" height="1.5" fill="#2a2a2a"/><rect x="0" y="795.3" width="36" height="1.5" fill="#2a2a2a"/><rect x="0" y="1008.7" width="36" height="1.5" fill="#2a2a2a"/><rect x="0" y="1222.0" width="36" height="1.5" fill="#2a2a2a"/><rect x="0" y="1435.3" width="36" height="1.5" fill="#2a2a2a"/><rect x="35" y="35" width="1482" height="1.5" fill="#7a7a7a"/><rect x="35" y="35" width="1.5" height="1452" fill="#7a7a7a"/><rect x="41.0" y="29" width="1.5" height="6" fill="#7a7a7a"/><rect x="74.3" y="29" width="1.5" height="6" fill="#7a7a7a"/><rect x="107.7" y="29" width="1.5" height="6" fill="#7a7a7a"/><rect x="141.0" y="19" width="1.5" height="16" fill="#7a7a7a"/><rect x="174.3" y="29" width="1.5" height="6" fill="#7a7a7a"/><rect x="207.7" y="29" width="1.5" height="6" fill="#7a7a7a"/><rect x="241.0" y="29" width="1.5" height="6" fill="#7a7a7a"/><rect x="274.3" y="29" width="1.5" height="6" fill="#7a7a7a"/><rect x="307.7" y="25" width="1.5" height="10" fill="#7a7a7a"/><rect x="341.0" y="29" width="1.5" height="6" fill="#7a7a7a"/><rect x="374.3" y="29" width="1.5" height="6" fill="#7a7a7a"/><rect x="407.7" y="29" width="1.5" height="6" fill="#7a7a7a"/><rect x="441.0" y="29" width="1.5" height="6" fill="#7a7a7a"/><rect x="474.3" y="19" width="1.5" height="16" fill="#7a7a7a"/><rect x="507.7" y="29" width="1.5" height="6" fill="#7a7a7a"/><rect x="541.0" y="29" width="1.5" height="6" fill="#7a7a7a"/><rect x="574.3" y="29" width="1.5" height="6" fill="#7a7a7a"/><rect x="607.7" y="29" width="1.5" height="6" fill="#7a7a7a"/><rect x="641.0" y="25" width="1.5" height="10" fill="#7a7a7a"/><rect x="674.3" y="29" width="1.5" height="6" fill="#7a7a7a"/><rect x="707.7" y="29" width="1.5" height="6" fill="#7a7a7a"/><rect x="741.0" y="29" width="1.5" height="6" fill="#7a7a7a"/><rect x="774.3" y="29" width="1.5" height="6" fill="#7a7a7a"/><rect x="807.7" y="19" width="1.5" height="16" fill="#7a7a7a"/><rect x="841.0" y="29" width="1.5" height="6" fill="#7a7a7a"/><rect x="874.3" y="29" width="1.5" height="6" fill="#7a7a7a"/><rect x="907.7" y="29" width="1.5" height="6" fill="#7a7a7a"/><rect x="941.0" y="29" width="1.5" height="6" fill="#7a7a7a"/><rect x="974.3" y="25" width="1.5" height="10" fill="#7a7a7a"/><rect x="1007.7" y="29" width="1.5" height="6" fill="#7a7a7a"/><rect x="1041.0" y="29" width="1.5" height="6" fill="#7a7a7a"/><rect x="1074.3" y="29" width="1.5" height="6" fill="#7a7a7a"/><rect x="1107.7" y="29" width="1.5" height="6" fill="#7a7a7a"/><rect x="1141.0" y="19" width="1.5" height="16" fill="#7a7a7a"/><rect x="1174.3" y="29" width="1.5" height="6" fill="#7a7a7a"/><rect x="1207.7" y="29" width="1.5" height="6" fill="#7a7a7a"/><rect x="1241.0" y="29" width="1.5" height="6" fill="#7a7a7a"/><rect x="1274.3" y="29" width="1.5" height="6" fill="#7a7a7a"/><rect x="1307.7" y="25" width="1.5" height="10" fill="#7a7a7a"/><rect x="1341.0" y="29" width="1.5" height="6" fill="#7a7a7a"/><rect x="1374.3" y="29" width="1.5" height="6" fill="#7a7a7a"/><rect x="1407.7" y="29" width="1.5" height="6" fill="#7a7a7a"/><rect x="1441.0" y="29" width="1.5" height="6" fill="#7a7a7a"/><rect x="1474.3" y="19" width="1.5" height="16" fill="#7a7a7a"/><rect x="30" y="48.7" width="6" height="1.5" fill="#7a7a7a"/><rect x="26" y="82.0" width="10" height="1.5" fill="#7a7a7a"/><rect x="30" y="115.3" width="6" height="1.5" fill="#7a7a7a"/><rect x="30" y="148.7" width="6" height="1.5" fill="#7a7a7a"/><rect x="30" y="182.0" width="6" height="1.5" fill="#7a7a7a"/><rect x="30" y="215.3" width="6" height="1.5" fill="#7a7a7a"/><rect x="20" y="248.7" width="16" height="1.5" fill="#7a7a7a"/><rect x="30" y="282.0" width="6" height="1.5" fill="#7a7a7a"/><rect x="30" y="315.3" width="6" height="1.5" fill="#7a7a7a"/><rect x="30" y="348.7" width="6" height="1.5" fill="#7a7a7a"/><rect x="30" y="382.0" width="6" height="1.5" fill="#7a7a7a"/><rect x="26" y="415.3" width="10" height="1.5" fill="#7a7a7a"/><rect x="30" y="448.7" width="6" height="1.5" fill="#7a7a7a"/><rect x="30" y="482.0" width="6" height="1.5" fill="#7a7a7a"/><rect x="30" y="515.3" width="6" height="1.5" fill="#7a7a7a"/><rect x="30" y="548.7" width="6" height="1.5" fill="#7a7a7a"/><rect x="20" y="582.0" width="16" height="1.5" fill="#7a7a7a"/><rect x="30" y="615.3" width="6" height="1.5" fill="#7a7a7a"/><rect x="30" y="648.7" width="6" height="1.5" fill="#7a7a7a"/><rect x="30" y="682.0" width="6" height="1.5" fill="#7a7a7a"/><rect x="30" y="715.3" width="6" height="1.5" fill="#7a7a7a"/><rect x="26" y="748.7" width="10" height="1.5" fill="#7a7a7a"/><rect x="30" y="782.0" width="6" height="1.5" fill="#7a7a7a"/><rect x="30" y="815.3" width="6" height="1.5" fill="#7a7a7a"/><rect x="30" y="848.7" width="6" height="1.5" fill="#7a7a7a"/><rect x="30" y="882.0" width="6" height="1.5" fill="#7a7a7a"/><rect x="20" y="915.3" width="16" height="1.5" fill="#7a7a7a"/><rect x="30" y="948.7" width="6" height="1.5" fill="#7a7a7a"/><rect x="30" y="982.0" width="6" height="1.5" fill="#7a7a7a"/><rect x="30" y="1015.3" width="6" height="1.5" fill="#7a7a7a"/><rect x="30" y="1048.7" width="6" height="1.5" fill="#7a7a7a"/><rect x="26" y="1082.0" width="10" height="1.5" fill="#7a7a7a"/><rect x="30" y="1115.3" width="6" height="1.5" fill="#7a7a7a"/><rect x="30" y="1148.7" width="6" height="1.5" fill="#7a7a7a"/><rect x="30" y="1182.0" width="6" height="1.5" fill="#7a7a7a"/><rect x="30" y="1215.3" width="6" height="1.5" fill="#7a7a7a"/><rect x="20" y="1248.7" width="16" height="1.5" fill="#7a7a7a"/><rect x="30" y="1282.0" width="6" height="1.5" fill="#7a7a7a"/><rect x="30" y="1315.3" width="6" height="1.5" fill="#7a7a7a"/><rect x="30" y="1348.7" width="6" height="1.5" fill="#7a7a7a"/><rect x="30" y="1382.0" width="6" height="1.5" fill="#7a7a7a"/><rect x="26" y="1415.3" width="10" height="1.5" fill="#7a7a7a"/><rect x="30" y="1448.7" width="6" height="1.5" fill="#7a7a7a"/><path d="M0 0 H16 L0 16Z" fill="#2f6fd8"/></svg>
<div class="t" style="left:693px;width:600px;text-align:center;top:218.6px;font-size:19px;color:#b4b4b4;font-weight:400;">0</div>
<div class="t" style="left:1026px;width:600px;text-align:center;top:218.6px;font-size:19px;color:#b4b4b4;font-weight:400;">500</div>
<div class="t" style="left:1359px;width:600px;text-align:center;top:218.6px;font-size:19px;color:#b4b4b4;font-weight:400;">1000</div>
<div class="t" style="left:1693px;width:600px;text-align:center;top:218.6px;font-size:19px;color:#b4b4b4;font-weight:400;">1500</div>
<div class="t" style="left:2026px;width:600px;text-align:center;top:218.6px;font-size:19px;color:#b4b4b4;font-weight:400;">2000</div>
<div class="t" style="left:564px;width:600px;text-align:center;top:431.6px;font-size:19px;color:#b4b4b4;font-weight:400;">5</div>
<div class="t" style="left:564px;width:600px;text-align:center;top:453.6px;font-size:19px;color:#b4b4b4;font-weight:400;">0</div>
<div class="t" style="left:564px;width:600px;text-align:center;top:475.6px;font-size:19px;color:#b4b4b4;font-weight:400;">0</div>
<div class="t" style="left:564px;width:600px;text-align:center;top:785.5px;font-size:19px;color:#b4b4b4;font-weight:400;">0</div>
<div class="t" style="left:564px;width:600px;text-align:center;top:1095.5px;font-size:19px;color:#b4b4b4;font-weight:400;">5</div>
<div class="t" style="left:564px;width:600px;text-align:center;top:1117.5px;font-size:19px;color:#b4b4b4;font-weight:400;">0</div>
<div class="t" style="left:564px;width:600px;text-align:center;top:1139.5px;font-size:19px;color:#b4b4b4;font-weight:400;">0</div>
<div class="t" style="left:564px;width:600px;text-align:center;top:1417.5px;font-size:19px;color:#b4b4b4;font-weight:400;">1</div>
<div class="t" style="left:564px;width:600px;text-align:center;top:1439.5px;font-size:19px;color:#b4b4b4;font-weight:400;">0</div>
<div class="t" style="left:564px;width:600px;text-align:center;top:1461.5px;font-size:19px;color:#b4b4b4;font-weight:400;">0</div>
<div class="t" style="left:564px;width:600px;text-align:center;top:1483.5px;font-size:19px;color:#b4b4b4;font-weight:400;">0</div>
<div style="left:2332px;top:214px;width:2px;height:1452px;background:#1b1b1b;"></div>
<div class="t" style="left:902px;top:259.0px;font-size:40px;color:#656565;font-weight:700;"><i class="k">ズ</i><i class="h">ー</i><i class="k">ム</i> -4</div>
<div class="t" style="left:1152px;top:259.0px;font-size:40px;color:#656565;font-weight:700;transform:scaleX(0.86);transform-origin:left;"><i class="h">選</i><i class="h">択</i><i class="h">項</i><i class="h">目</i>:1,927.14 x 773.42</div>
<div style="left:983px;top:890px;width:1288px;height:495px;background:#000000;"></div>
<div style="left:991px;top:796px;width:1280px;height:94px;background:#ffffff;"></div>
<svg style="left:1014px;top:810px;" width="64" height="64" viewBox="0 0 64 64"><g transform="scale(1.0000)"><path d="M31.2 0 L0 53.8 L62.4 53.8Z" fill="#f0e058"/><circle cx="31" cy="36.5" r="25.5" fill="#f0e058"/><circle cx="31" cy="35.7" r="15.6" fill="#ffffff"/></g></svg>
<div class="t" style="left:1110px;top:831.4px;font-size:23px;color:#111111;font-weight:700;transform:scaleX(0.88);transform-origin:left;">@syui.ai</div>
<svg style="left:991px;top:784px;" width="1280" height="3" viewBox="0 0 1280 3"><line x1="0" y1="1.5" x2="1280" y2="1.5" stroke="#2b2b2b" stroke-width="1.2" opacity="1"/><line x1="0" y1="1.5" x2="1280" y2="1.5" stroke="#d0d0d0" stroke-width="1.2" stroke-dasharray="4 2.5" opacity="1"/></svg>
<svg style="left:991px;top:795px;" width="1280" height="3" viewBox="0 0 1280 3"><line x1="0" y1="1.5" x2="1280" y2="1.5" stroke="#404040" stroke-width="1.2" opacity="1"/><line x1="0" y1="1.5" x2="1280" y2="1.5" stroke="#ffffff" stroke-width="1.2" stroke-dasharray="4 2.5" opacity="1"/></svg>
<svg style="left:990px;top:796px;" width="3" height="94" viewBox="0 0 3 94"><line x1="1.5" y1="0" x2="1.5" y2="94" stroke="#404040" stroke-width="1.2" opacity="1"/><line x1="1.5" y1="0" x2="1.5" y2="94" stroke="#ffffff" stroke-width="1.2" stroke-dasharray="4 2.5" opacity="1"/></svg>
<svg style="left:1099px;top:796px;" width="3" height="94" viewBox="0 0 3 94"><line x1="1.5" y1="0" x2="1.5" y2="94" stroke="#505050" stroke-width="1.2" opacity="1"/><line x1="1.5" y1="0" x2="1.5" y2="94" stroke="#ffffff" stroke-width="1.2" stroke-dasharray="4 2.5" opacity="1"/></svg>
<svg style="left:991px;top:889px;" width="1280" height="3" viewBox="0 0 1280 3"><line x1="0" y1="1.5" x2="1280" y2="1.5" stroke="#404040" stroke-width="1.2" opacity="1"/><line x1="0" y1="1.5" x2="1280" y2="1.5" stroke="#ffffff" stroke-width="1.2" stroke-dasharray="4 2.5" opacity="1"/></svg>
<svg style="left:1124px;top:899px;" width="134" height="179" viewBox="0 0 134 179"><rect x="0" y="0" width="134" height="171" fill="#a8a83c"/><path d="M20 0 L45 12 L30 0Z M70 0 L120 14 L95 0Z M134 15 L118 40 L134 60Z M0 30 L12 50 L0 80Z M0 120 L14 100 L10 150Z M134 90 L120 120 L134 150Z M25 171 L60 158 L80 171Z M100 171 L115 158 L134 165 L134 171Z M0 0 L14 14 L0 18Z" fill="#c4c44e" opacity="0.75"/><path d="M0 60 L14 75 M134 70 L122 95 M40 171 L55 157 M90 0 L105 11 M134 130 L121 150" stroke="#c8c850" stroke-width="1.5" opacity="0.8"/><rect x="12.5" y="10" width="109.5" height="147" fill="none" stroke="#e0e060" stroke-width="3"/><rect x="15" y="12.5" width="104" height="142" fill="#383838"/><rect x="0" y="171" width="134" height="8" fill="#ffffff"/></svg>
<svg style="left:1124px;top:1365px;" width="134" height="20" viewBox="0 0 134 20"><rect x="0" y="0" width="134" height="171" fill="#a8a83c"/><path d="M20 0 L45 12 L30 0Z M70 0 L120 14 L95 0Z M134 15 L118 40 L134 60Z M0 30 L12 50 L0 80Z M0 120 L14 100 L10 150Z M134 90 L120 120 L134 150Z M25 171 L60 158 L80 171Z M100 171 L115 158 L134 165 L134 171Z M0 0 L14 14 L0 18Z" fill="#c4c44e" opacity="0.75"/><path d="M0 60 L14 75 M134 70 L122 95 M40 171 L55 157 M90 0 L105 11 M134 130 L121 150" stroke="#c8c850" stroke-width="1.5" opacity="0.8"/><rect x="12.5" y="10" width="109.5" height="147" fill="none" stroke="#e0e060" stroke-width="3"/><rect x="15" y="12.5" width="104" height="142" fill="#383838"/><rect x="0" y="171" width="134" height="8" fill="#ffffff"/></svg>
<svg style="left:1171px;top:961px;" width="42" height="42" viewBox="0 0 42 42"><g transform="scale(0.6410)"><path d="M31.2 0 L0 53.8 L62.4 53.8Z" fill="#f8f850"/><circle cx="31" cy="36.5" r="25.5" fill="#f8f850"/><circle cx="31" cy="35.7" r="15.6" fill="#383838"/></g></svg>
<div style="left:1025px;top:1101px;width:332px;height:40px;background:#ffffff;"></div>
<div class="t" style="left:891px;width:600px;text-align:center;top:1114.4px;font-size:12px;color:#111111;font-weight:700;">100</div>
<svg style="left:1024px;top:890px;" width="3" height="495" viewBox="0 0 3 495"><line x1="1.5" y1="0" x2="1.5" y2="495" stroke="#000000" stroke-width="1.2" opacity="0.9"/><line x1="1.5" y1="0" x2="1.5" y2="495" stroke="#bbbbbb" stroke-width="1.2" stroke-dasharray="4 2.5" opacity="0.9"/></svg>
<svg style="left:1356px;top:890px;" width="3" height="495" viewBox="0 0 3 495"><line x1="1.5" y1="0" x2="1.5" y2="495" stroke="#000000" stroke-width="1.2" opacity="0.9"/><line x1="1.5" y1="0" x2="1.5" y2="495" stroke="#bbbbbb" stroke-width="1.2" stroke-dasharray="4 2.5" opacity="0.9"/></svg>
<svg style="left:1025px;top:1342px;" width="332" height="3" viewBox="0 0 332 3"><line x1="0" y1="1.5" x2="332" y2="1.5" stroke="#000000" stroke-width="1.2" opacity="0.9"/><line x1="0" y1="1.5" x2="332" y2="1.5" stroke="#bbbbbb" stroke-width="1.2" stroke-dasharray="4 2.5" opacity="0.9"/></svg>
<svg style="left:1537px;top:899px;" width="134" height="179" viewBox="0 0 134 179"><rect x="0" y="0" width="134" height="171" fill="#a8a83c"/><path d="M20 0 L45 12 L30 0Z M70 0 L120 14 L95 0Z M134 15 L118 40 L134 60Z M0 30 L12 50 L0 80Z M0 120 L14 100 L10 150Z M134 90 L120 120 L134 150Z M25 171 L60 158 L80 171Z M100 171 L115 158 L134 165 L134 171Z M0 0 L14 14 L0 18Z" fill="#c4c44e" opacity="0.75"/><path d="M0 60 L14 75 M134 70 L122 95 M40 171 L55 157 M90 0 L105 11 M134 130 L121 150" stroke="#c8c850" stroke-width="1.5" opacity="0.8"/><rect x="12.5" y="10" width="109.5" height="147" fill="none" stroke="#e0e060" stroke-width="3"/><rect x="15" y="12.5" width="104" height="142" fill="#383838"/><rect x="0" y="171" width="134" height="8" fill="#ffffff"/></svg>
<svg style="left:1537px;top:1365px;" width="134" height="20" viewBox="0 0 134 20"><rect x="0" y="0" width="134" height="171" fill="#a8a83c"/><path d="M20 0 L45 12 L30 0Z M70 0 L120 14 L95 0Z M134 15 L118 40 L134 60Z M0 30 L12 50 L0 80Z M0 120 L14 100 L10 150Z M134 90 L120 120 L134 150Z M25 171 L60 158 L80 171Z M100 171 L115 158 L134 165 L134 171Z M0 0 L14 14 L0 18Z" fill="#c4c44e" opacity="0.75"/><path d="M0 60 L14 75 M134 70 L122 95 M40 171 L55 157 M90 0 L105 11 M134 130 L121 150" stroke="#c8c850" stroke-width="1.5" opacity="0.8"/><rect x="12.5" y="10" width="109.5" height="147" fill="none" stroke="#e0e060" stroke-width="3"/><rect x="15" y="12.5" width="104" height="142" fill="#383838"/><rect x="0" y="171" width="134" height="8" fill="#ffffff"/></svg>
<svg style="left:1584px;top:961px;" width="42" height="42" viewBox="0 0 42 42"><g transform="scale(0.6410)"><path d="M31.2 0 L0 53.8 L62.4 53.8Z" fill="#f8f850"/><circle cx="31" cy="36.5" r="25.5" fill="#f8f850"/><circle cx="31" cy="35.7" r="15.6" fill="#383838"/></g></svg>
<div style="left:1438px;top:1101px;width:332px;height:40px;background:#ffffff;"></div>
<div class="t" style="left:1304px;width:600px;text-align:center;top:1114.4px;font-size:12px;color:#111111;font-weight:700;">100</div>
<svg style="left:1437px;top:890px;" width="3" height="495" viewBox="0 0 3 495"><line x1="1.5" y1="0" x2="1.5" y2="495" stroke="#000000" stroke-width="1.2" opacity="0.9"/><line x1="1.5" y1="0" x2="1.5" y2="495" stroke="#bbbbbb" stroke-width="1.2" stroke-dasharray="4 2.5" opacity="0.9"/></svg>
<svg style="left:1769px;top:890px;" width="3" height="495" viewBox="0 0 3 495"><line x1="1.5" y1="0" x2="1.5" y2="495" stroke="#000000" stroke-width="1.2" opacity="0.9"/><line x1="1.5" y1="0" x2="1.5" y2="495" stroke="#bbbbbb" stroke-width="1.2" stroke-dasharray="4 2.5" opacity="0.9"/></svg>
<svg style="left:1438px;top:1342px;" width="332" height="3" viewBox="0 0 332 3"><line x1="0" y1="1.5" x2="332" y2="1.5" stroke="#000000" stroke-width="1.2" opacity="0.9"/><line x1="0" y1="1.5" x2="332" y2="1.5" stroke="#bbbbbb" stroke-width="1.2" stroke-dasharray="4 2.5" opacity="0.9"/></svg>
<svg style="left:1949px;top:899px;" width="134" height="179" viewBox="0 0 134 179"><rect x="0" y="0" width="134" height="171" fill="#a8a83c"/><path d="M20 0 L45 12 L30 0Z M70 0 L120 14 L95 0Z M134 15 L118 40 L134 60Z M0 30 L12 50 L0 80Z M0 120 L14 100 L10 150Z M134 90 L120 120 L134 150Z M25 171 L60 158 L80 171Z M100 171 L115 158 L134 165 L134 171Z M0 0 L14 14 L0 18Z" fill="#c4c44e" opacity="0.75"/><path d="M0 60 L14 75 M134 70 L122 95 M40 171 L55 157 M90 0 L105 11 M134 130 L121 150" stroke="#c8c850" stroke-width="1.5" opacity="0.8"/><rect x="12.5" y="10" width="109.5" height="147" fill="none" stroke="#e0e060" stroke-width="3"/><rect x="15" y="12.5" width="104" height="142" fill="#383838"/><rect x="0" y="171" width="134" height="8" fill="#ffffff"/></svg>
<svg style="left:1949px;top:1365px;" width="134" height="20" viewBox="0 0 134 20"><rect x="0" y="0" width="134" height="171" fill="#a8a83c"/><path d="M20 0 L45 12 L30 0Z M70 0 L120 14 L95 0Z M134 15 L118 40 L134 60Z M0 30 L12 50 L0 80Z M0 120 L14 100 L10 150Z M134 90 L120 120 L134 150Z M25 171 L60 158 L80 171Z M100 171 L115 158 L134 165 L134 171Z M0 0 L14 14 L0 18Z" fill="#c4c44e" opacity="0.75"/><path d="M0 60 L14 75 M134 70 L122 95 M40 171 L55 157 M90 0 L105 11 M134 130 L121 150" stroke="#c8c850" stroke-width="1.5" opacity="0.8"/><rect x="12.5" y="10" width="109.5" height="147" fill="none" stroke="#e0e060" stroke-width="3"/><rect x="15" y="12.5" width="104" height="142" fill="#383838"/><rect x="0" y="171" width="134" height="8" fill="#ffffff"/></svg>
<svg style="left:1996px;top:961px;" width="42" height="42" viewBox="0 0 42 42"><g transform="scale(0.6410)"><path d="M31.2 0 L0 53.8 L62.4 53.8Z" fill="#f8f850"/><circle cx="31" cy="36.5" r="25.5" fill="#f8f850"/><circle cx="31" cy="35.7" r="15.6" fill="#383838"/></g></svg>
<div style="left:1850px;top:1101px;width:332px;height:40px;background:#ffffff;"></div>
<div class="t" style="left:1716px;width:600px;text-align:center;top:1114.4px;font-size:12px;color:#111111;font-weight:700;">100</div>
<svg style="left:1849px;top:890px;" width="3" height="495" viewBox="0 0 3 495"><line x1="1.5" y1="0" x2="1.5" y2="495" stroke="#000000" stroke-width="1.2" opacity="0.9"/><line x1="1.5" y1="0" x2="1.5" y2="495" stroke="#bbbbbb" stroke-width="1.2" stroke-dasharray="4 2.5" opacity="0.9"/></svg>
<svg style="left:2181px;top:890px;" width="3" height="495" viewBox="0 0 3 495"><line x1="1.5" y1="0" x2="1.5" y2="495" stroke="#000000" stroke-width="1.2" opacity="0.9"/><line x1="1.5" y1="0" x2="1.5" y2="495" stroke="#bbbbbb" stroke-width="1.2" stroke-dasharray="4 2.5" opacity="0.9"/></svg>
<svg style="left:1850px;top:1342px;" width="332" height="3" viewBox="0 0 332 3"><line x1="0" y1="1.5" x2="332" y2="1.5" stroke="#000000" stroke-width="1.2" opacity="0.9"/><line x1="0" y1="1.5" x2="332" y2="1.5" stroke="#bbbbbb" stroke-width="1.2" stroke-dasharray="4 2.5" opacity="0.9"/></svg>
<svg style="left:989px;top:890px;" width="3" height="495" viewBox="0 0 3 495"><line x1="1.5" y1="0" x2="1.5" y2="495" stroke="#000000" stroke-width="1.2" opacity="0.9"/><line x1="1.5" y1="0" x2="1.5" y2="495" stroke="#bbbbbb" stroke-width="1.2" stroke-dasharray="4 2.5" opacity="0.9"/></svg>
<div style="left:2224px;top:891px;width:42px;height:86px;background:#ffffff;"></div>
<div style="left:2245px;top:977px;width:1px;height:408px;background:#3a3a3a;"></div>
<div style="left:991px;top:1385px;width:1280px;height:130px;background:#ffffff;"></div>
<div style="left:1419px;top:1385px;width:2px;height:130px;background:#c8c8c8;"></div>
<div style="left:1850px;top:1385px;width:2px;height:130px;background:#c8c8c8;"></div>
<svg style="left:991px;top:1514px;" width="1288" height="3" viewBox="0 0 1288 3"><line x1="0" y1="1.5" x2="1288" y2="1.5" stroke="#404040" stroke-width="1.2" opacity="1"/><line x1="0" y1="1.5" x2="1288" y2="1.5" stroke="#ffffff" stroke-width="1.2" stroke-dasharray="4 2.5" opacity="1"/></svg>
<svg style="left:990px;top:1385px;" width="3" height="130" viewBox="0 0 3 130"><line x1="1.5" y1="0" x2="1.5" y2="130" stroke="#404040" stroke-width="1.2" opacity="1"/><line x1="1.5" y1="0" x2="1.5" y2="130" stroke="#ffffff" stroke-width="1.2" stroke-dasharray="4 2.5" opacity="1"/></svg>
<svg style="left:2277px;top:796px;" width="3" height="719" viewBox="0 0 3 719"><line x1="1.5" y1="0" x2="1.5" y2="719" stroke="#404040" stroke-width="1.2" opacity="1"/><line x1="1.5" y1="0" x2="1.5" y2="719" stroke="#ffffff" stroke-width="1.2" stroke-dasharray="4 2.5" opacity="1"/></svg>
<svg style="left:1182px;top:1431px;" width="44" height="44" viewBox="0 0 44 44"><polygon points="28.00,15.00 27.75,17.54 23.65,18.58 22.78,20.20 24.19,24.19 22.22,25.81 18.58,23.65 16.83,24.18 15.00,28.00 12.46,27.75 11.42,23.65 9.80,22.78 5.81,24.19 4.19,22.22 6.35,18.58 5.82,16.83 2.00,15.00 2.25,12.46 6.35,11.42 7.22,9.80 5.81,5.81 7.78,4.19 11.42,6.35 13.17,5.82 15.00,2.00 17.54,2.25 18.58,6.35 20.20,7.22 24.19,5.81 25.81,7.78 23.65,11.42 24.18,13.17" fill="#000"/><circle cx="15" cy="15" r="3.90" fill="#fff"/><polygon points="40.00,30.00 39.81,31.95 36.65,32.76 35.99,34.00 37.07,37.07 35.56,38.31 32.76,36.65 31.40,37.06 30.00,40.00 28.05,39.81 27.24,36.65 26.00,35.99 22.93,37.07 21.69,35.56 23.35,32.76 22.94,31.40 20.00,30.00 20.19,28.05 23.35,27.24 24.01,26.00 22.93,22.93 24.44,21.69 27.24,23.35 28.60,22.94 30.00,20.00 31.95,20.19 32.76,23.35 34.00,24.01 37.07,22.93 38.31,24.44 36.65,27.24 37.06,28.60" fill="#000"/><circle cx="30" cy="30" r="3.00" fill="#fff"/></svg>
<svg style="left:1614px;top:1430px;" width="40" height="40" viewBox="0 0 40 40"><path d="M12 8 A15 15 0 1 0 28 8" fill="none" stroke="#000" stroke-width="3.6"/><path d="M20 2 V19" stroke="#000" stroke-width="3.6"/></svg>
<svg style="left:2047px;top:1433px;" width="38" height="34" viewBox="0 0 38 34"><path d="M19 2 L36 31 Q37 33 35 33 H3 Q1 33 2 31Z" fill="#000" stroke="#000" stroke-width="2" stroke-linejoin="round"/><rect x="17.5" y="11" width="3.5" height="11" rx="1.5" fill="#fff"/><circle cx="19.2" cy="26.5" r="2.2" fill="#fff"/></svg>
<div style="left:983px;top:875px;width:1288px;height:520px;border:2px solid #5de23c;"></div>
<div style="left:966px;top:857px;width:14px;height:14px;background:#f4f4f4;border-radius:50%;"></div>
<div style="left:966px;top:1125px;width:14px;height:14px;background:#f4f4f4;border-radius:50%;"></div>
<div style="left:966px;top:1392px;width:14px;height:14px;background:#f4f4f4;border-radius:50%;"></div>
<div style="left:2267px;top:856px;width:16px;height:16px;background:#f0f0f0;border-radius:50%;border:3px solid #505050;"></div>
<div style="left:2267px;top:1124px;width:16px;height:16px;background:#f0f0f0;border-radius:50%;border:3px solid #505050;"></div>
<div style="left:2267px;top:1391px;width:16px;height:16px;background:#f0f0f0;border-radius:50%;border:3px solid #505050;"></div>
<div style="left:1615px;top:857px;width:16px;height:16px;background:#f0f0f0;border-radius:50%;border:3px solid #505050;"></div>
<div style="left:1615px;top:1391px;width:16px;height:16px;background:#f0f0f0;border-radius:50%;border:3px solid #505050;"></div>
<svg style="left:943px;top:747px;" width="50" height="50" viewBox="0 0 50 50"><path d="M1 1 L23 2 L42 34 L49 35 L49 49 L36 49 L33 43 L4 22 L1 17Z" fill="#ffffff" stroke="#111" stroke-width="1.2"/></svg>
<svg style="left:2270px;top:747px;transform:scaleX(-1);" width="50" height="50" viewBox="0 0 50 50"><path d="M1 1 L23 2 L42 34 L49 35 L49 49 L36 49 L33 43 L4 22 L1 17Z" fill="#ffffff" stroke="#111" stroke-width="1.2"/></svg>
<svg style="left:943px;top:1514px;transform:scaleY(-1);" width="50" height="50" viewBox="0 0 50 50"><path d="M1 1 L23 2 L42 34 L49 35 L49 49 L36 49 L33 43 L4 22 L1 17Z" fill="#ffffff" stroke="#111" stroke-width="1.2"/></svg>
<svg style="left:2270px;top:1514px;transform:scale(-1,-1);" width="50" height="50" viewBox="0 0 50 50"><path d="M1 1 L23 2 L42 34 L49 35 L49 49 L36 49 L33 43 L4 22 L1 17Z" fill="#ffffff" stroke="#111" stroke-width="1.2"/></svg>
<div class="t" style="left:902px;top:1516.3px;font-size:43px;color:#636363;font-weight:500;"><i class="k">デ</i><i class="k">バ</i><i class="k">イ</i><i class="k">ス</i><i class="k">コ</i><i class="k">ン</i><i class="k">テ</i><i class="k">ン</i><i class="k">ツ</i><i class="k">ス</i><i class="k">ケ</i><i class="h">ー</i><i class="k">ル</i> <span style="letter-spacing:0;font-weight:700;display:inline-block;margin-left:12px;transform:scaleX(0.9);transform-origin:left">1.0</span></div>
<div class="t" style="left:902px;top:1566.3px;font-size:43px;color:#636363;font-weight:500;"><i class="k">デ</i><i class="k">バ</i><i class="k">イ</i><i class="k">ス</i><i class="k">セ</i><i class="h">ー</i><i class="k">フ</i><i class="k">ゾ</i><i class="h">ー</i><i class="k">ン</i><i class="k">セ</i><i class="s">ッ</i><i class="k">ト</i><i class="g">が</i><i class="g">あ</i><i class="g">り</i><i class="g">ま</i><i class="g">せ</i><i class="g">ん</i></div>
<div class="t" style="left:902px;top:1614.3px;font-size:43px;color:#636363;font-weight:700;transform:scaleX(0.89);transform-origin:left;">1280 x 720 (16:9)</div>
<div class="t" style="right:615px;top:1615.5px;font-size:41px;color:#636363;font-weight:700;">DPI <i class="k">ス</i><i class="k">ケ</i><i class="h">ー</i><i class="k">ル</i> 0.67</div>
<svg style="left:2284px;top:1624px;" width="34" height="34" viewBox="0 0 34 34"><g transform="translate(17 17)"><path d="M-3 -16 H3 L4 -11 L9 -9 L13 -12 L17 -8 L13 -3 L15 2 L16 3 V3 L13 5 L12 10 L8 14 L3 12 L-3 12 L-8 14 L-12 10 L-13 5 L-16 3 L-15 -2 L-13 -3 L-17 -8 L-13 -12 L-9 -9 L-4 -11Z" fill="#a3b0e3"/><circle cx="0" cy="0" r="7" fill="#2b2b2b"/><rect x="-9" y="0" width="18" height="3" fill="#2b2b2b"/></g></svg>
<div style="left:1589px;top:252px;width:114px;height:47px;background:#333333;border-radius:24px;border:2px solid #1e1e1e;"></div>
<div style="left:1640px;top:254px;width:2px;height:43px;background:#202020;"></div>
<svg style="left:1597px;top:259px;" width="34" height="34" viewBox="0 0 34 34"><circle cx="17" cy="17" r="15" fill="#bdbdbd"/><path d="M7 9 Q12 6 14 11 Q11 15 13 19 Q9 22 6 17Z M18 5 Q24 8 27 13 Q23 14 21 11 Q18 10 18 5Z M20 19 Q26 18 28 22 Q25 28 20 29 Q21 24 20 19Z" fill="#6a6a6a"/></svg>
<div class="t" style="left:1648px;top:261.2px;font-size:25px;color:#c8c8c8;font-weight:400;"><i class="g">な</i><i class="g">し</i></div>
<div style="left:1717px;top:252px;width:98px;height:47px;background:#2f6bd6;border-radius:24px;border:2px solid #1e1e1e;"></div>
<div style="left:1766px;top:254px;width:2px;height:43px;background:#1f3f80;"></div>
<div style="left:1726px;top:261px;width:31px;height:31px;border:2px dashed #6c84b0;"></div>
<svg style="left:1778px;top:259px;" width="26" height="32" viewBox="0 0 26 32"><path d="M6 14 V9 a7 7 0 0 1 14 0 V14" fill="none" stroke="#fff" stroke-width="3.5"/><rect x="2" y="13" width="22" height="17" rx="2" fill="#fff"/><rect x="11.5" y="18" width="3" height="6" fill="#2f6bd6"/></svg>
<div style="left:1829px;top:252px;width:98px;height:47px;background:#333333;border-radius:24px;border:2px solid #1e1e1e;"></div>
<div style="left:1829px;top:252px;width:50px;height:47px;background:#2f6bd6;border-radius:24px 0 0 24px;border:2px solid #1e1e1e;border-right:none;"></div>
<svg style="left:1843px;top:261px;" width="30" height="30" viewBox="0 0 30 30"><rect x="0" y="4" width="8" height="24" rx="2" fill="#d8d8d8"/><rect x="10" y="2" width="18" height="6" rx="2" fill="#d8d8d8"/><rect x="10" y="10" width="18" height="18" rx="2" fill="#d8d8d8"/></svg>
<div class="t" style="left:1893px;top:259.6px;font-size:28px;color:#c8c8c8;font-weight:700;">R</div>
<div style="left:1941px;top:252px;width:79px;height:47px;background:#333333;border-radius:24px;border:2px solid #1e1e1e;"></div>
<div style="left:1941px;top:252px;width:50px;height:47px;background:#2f6bd6;border-radius:24px 0 0 24px;border:2px solid #1e1e1e;border-right:none;"></div>
<svg style="left:1954px;top:263px;" width="28" height="28" viewBox="0 0 28 28"><g fill="none" stroke="#fff" stroke-width="2.5"><rect x="1.5" y="1.5" width="25" height="25" rx="2"/><path d="M10 1 V27 M18 1 V27 M1 10 H27 M1 18 H27"/></g></svg>
<div class="t" style="left:1996px;top:259.6px;font-size:28px;color:#c8c8c8;font-weight:400;">4</div>
<div style="left:2021px;top:252px;width:44px;height:47px;background:#2e2e2e;border-radius:50%;border:2px solid #1e1e1e;"></div>
<div style="left:2069px;top:252px;width:44px;height:47px;background:#2e2e2e;border-radius:50%;border:2px solid #1e1e1e;"></div>
<div style="left:2115px;top:252px;width:44px;height:47px;background:#2e2e2e;border-radius:50%;border:2px solid #1e1e1e;"></div>
<svg style="left:2028px;top:261px;" width="30" height="30" viewBox="0 0 30 30"><path d="M2 8 V2 H8 M22 2 H28 V8 M28 22 V28 H22 M8 28 H2 V22" fill="none" stroke="#8a8a8a" stroke-width="2"/><path d="M11 8 L22 17 L17 18 L20 24 L17 25 L14 19 L11 22Z" fill="#d0d0d0"/></svg>
<svg style="left:2076px;top:263px;" width="30" height="26" viewBox="0 0 30 26"><rect x="1" y="1" width="28" height="22" fill="none" stroke="#8a8a8a" stroke-width="2"/><circle cx="7" cy="7" r="2.5" fill="#8a8a8a"/><path d="M2 22 L11 12 L17 17 L22 12 L28 22Z" fill="#8a8a8a"/></svg>
<svg style="left:2122px;top:261px;" width="30" height="30" viewBox="0 0 30 30"><path d="M13 2 V28 H2Z" fill="none" stroke="#8a8a8a" stroke-width="1.5"/><path d="M17 2 V28 H28Z" fill="#8a8a8a"/></svg>
<div style="left:2164px;top:252px;width:196px;height:47px;background:#333333;border-radius:24px;border:2px solid #1e1e1e;"></div>
<div class="t" style="left:2174px;top:260.6px;font-size:28px;color:#c8c8c8;font-weight:400;"><i class="h">画</i><i class="h">面</i><i class="k">サ</i><i class="k">イ</i><i class="k">ズ</i></div>
<svg style="left:2310px;top:268px;" width="22" height="14" viewBox="0 0 22 14"><path d="M2 3 L11 11 L20 3" stroke="#d2d2d2" stroke-width="3" fill="none"/></svg>
<div style="left:2334px;top:214px;width:10px;height:1452px;background:#1b1b1b;"></div>
<div style="left:2344px;top:214px;width:320px;height:50px;background:#262626;border-radius:7px 7px 0 0;"></div>
<svg style="left:2354px;top:222px;" width="32" height="32" viewBox="0 0 32 32"><path d="M2 6 H14 M2 12 H10 M12 27 H30 M16 21 H30" stroke="#9a9a9a" stroke-width="2"/><path d="M4 30 L8 20 L24 4 L30 10 L14 26Z" fill="#d8d8d8"/><path d="M4 30 L8 20 L14 26Z" fill="#888"/></svg>
<div class="t" style="left:2399px;top:221.6px;font-size:28px;color:#d8d8d8;font-weight:400;"><i class="h">詳</i><i class="h">細</i></div>
<svg style="left:2621px;top:229px;" width="16" height="16" viewBox="0 0 16 16"><path d="M2 2 L14 14 M14 2 L2 14" stroke="#d8d8d8" stroke-width="2.6"/></svg>
<div style="left:2344px;top:264px;width:528px;height:338px;background:#2a2a2a;"></div>
<svg style="left:2358px;top:291px;" width="28" height="28" viewBox="0 0 28 28"><g fill="none" stroke="#c8c8c8" stroke-width="3"><rect x="1.5" y="1.5" width="7" height="7"/><rect x="12" y="1.5" width="14.5" height="11"/><rect x="1.5" y="12" width="7" height="7"/><rect x="1.5" y="20" width="7" height="6.5"/><rect x="12" y="16" width="6" height="10.5"/><rect x="21" y="16" width="5.5" height="10.5"/></g></svg>
<div style="left:2396px;top:284px;width:396px;height:42px;background:#151515;border:2px solid #2e2e2e;border-radius:7px;"></div>
<div class="t" style="left:2412px;top:289.6px;font-size:28px;color:#d2d2d2;font-weight:400;transform:scaleX(0.9);transform-origin:left;">GridPanel_33</div>
<div style="left:2807px;top:288px;width:33px;height:33px;background:#151515;border:2px solid #2e2e2e;border-radius:4px;"></div>
<div class="t" style="left:2848px;top:289.6px;font-size:28px;color:#d2d2d2;font-weight:400;">Is</div>
<div style="left:2366px;top:338px;width:344px;height:41px;background:#383838;border:2px solid #222;border-radius:7px;"></div>
<svg style="left:2394px;top:343px;" width="28" height="28" viewBox="0 0 28 28"><path d="M14 1 V27 M1 14 H27" stroke="#8cc152" stroke-width="4"/></svg>
<div class="t" style="left:2430px;top:342.6px;font-size:28px;color:#d8d8d8;font-weight:400;"><i class="k">コ</i><i class="k">ン</i><i class="k">ポ</i><i class="h">ー</i><i class="k">ネ</i><i class="k">ン</i><i class="k">ト</i><i class="g">を</i><i class="h">追</i><i class="h">加</i></div>
<div style="left:2364px;top:388px;width:488px;height:120px;background:#1f1f1f;"></div>
<div style="left:2362px;top:541px;width:396px;height:45px;background:#141414;border:2px solid #2c2c2c;border-radius:23px;"></div>
<svg style="left:2372px;top:550px;" width="27" height="27" viewBox="0 0 27 27"><circle cx="11" cy="11" r="8.5" fill="none" stroke="#e0e0e0" stroke-width="2.6"/><path d="M17 17 L25 25" stroke="#e0e0e0" stroke-width="2.8"/></svg>
<div class="t" style="left:2414px;top:547.6px;font-size:28px;color:#5e5e5e;font-weight:400;"><i class="h">検</i><i class="h">索</i></div>
<svg style="left:2786px;top:549px;" width="30" height="30" viewBox="0 0 30 30"><rect x="1" y="1" width="28" height="28" rx="2" fill="#cfcfcf"/><path d="M3 10 H27 M3 19 H27 M15 10 V27" stroke="#2a2a2a" stroke-width="2.5"/></svg>
<svg style="left:2833px;top:548px;" width="32" height="32" viewBox="0 0 32 32"><g transform="translate(16 16)"><circle r="11" fill="#cfcfcf"/><g fill="#cfcfcf"><rect x="-3" y="-15" width="6" height="30"/><rect x="-15" y="-3" width="30" height="6"/><rect x="-3" y="-15" width="6" height="30" transform="rotate(45)"/><rect x="-3" y="-15" width="6" height="30" transform="rotate(-45)"/></g><circle r="6" fill="#2a2a2a"/><circle r="3.5" fill="#8a8a8a"/></g></svg>
<div style="left:2344px;top:602px;width:528px;height:1061px;background:#1e1e1e;"></div>
<div style="left:2344px;top:600px;width:496px;height:54px;background:#333333;"></div>
<svg style="left:2354px;top:621px;" width="22" height="14" viewBox="0 0 22 14"><path d="M1 1 H21 L11 13Z" fill="#8a8a8a"/></svg>
<div class="t" style="left:2386px;top:615.9px;font-size:22px;color:#d2d2d2;font-weight:700;"><i class="k">ス</i><i class="k">ロ</i><i class="s">ッ</i><i class="k">ト</i> (<i class="k">キ</i><i class="s">ャ</i><i class="k">ン</i><i class="k">バ</i><i class="k">ス</i><i class="k">パ</i><i class="k">ネ</i><i class="k">ル</i><i class="k">ス</i><i class="k">ロ</i><i class="s">ッ</i><i class="k">ト</i>)</div>
<div style="left:2344px;top:656px;width:496px;height:52px;background:#242424;"></div>
<div style="left:2541px;top:656px;width:2px;height:54px;background:#1b1b1b;"></div>
<div style="left:2751px;top:656px;width:2px;height:54px;background:#1b1b1b;"></div>
<svg style="left:2357px;top:673px;" width="14" height="20" viewBox="0 0 14 20"><path d="M1 1 L13 10 L1 19Z" fill="#8a8a8a"/></svg>
<div class="t" style="left:2388px;top:670.6px;font-size:22.5px;color:#c8c8c8;font-weight:400;"><i class="k">ア</i><i class="k">ン</i><i class="k">カ</i><i class="h">ー</i></div>
<div style="left:2567px;top:663.0px;width:177px;height:41px;background:#151515;border:2px solid #2b2b2b;border-radius:6px;"></div>
<div class="t" style="left:2582px;top:667.6px;font-size:28px;color:#d8d8d8;font-weight:400;"><i class="k">ア</i><i class="k">ン</i><i class="k">カ</i><i class="h">ー</i></div>
<svg style="left:2700px;top:677.0px;" width="22" height="14" viewBox="0 0 22 14"><path d="M2 3 L11 11 L20 3" stroke="#d2d2d2" stroke-width="3" fill="none"/></svg>
<svg style="left:2806px;top:672.0px;" width="26" height="22" viewBox="0 0 26 22"><path d="M8 2 L2 8 L8 14" fill="none" stroke="#c8c8c8" stroke-width="2.6"/><path d="M2 8 H16 a7 7 0 0 1 0 12 H14" fill="none" stroke="#c8c8c8" stroke-width="2.6"/></svg>
<div style="left:2344px;top:710px;width:496px;height:52px;background:#242424;"></div>
<div style="left:2541px;top:710px;width:2px;height:54px;background:#1b1b1b;"></div>
<div style="left:2751px;top:710px;width:2px;height:54px;background:#1b1b1b;"></div>
<div class="t" style="left:2388px;top:724.6px;font-size:22.5px;color:#c8c8c8;font-weight:400;"><i class="h">左</i><i class="k">オ</i><i class="k">フ</i><i class="k">セ</i><i class="s">ッ</i><i class="k">ト</i></div>
<div style="left:2567px;top:719.0px;width:177px;height:37px;background:#151515;border:2px solid #2b2b2b;border-radius:6px;"></div>
<div class="t" style="left:2581px;top:723.8px;font-size:24px;color:#e0e0e0;font-weight:400;">-11.850281</div>
<svg style="left:2767px;top:726.0px;" width="26" height="22" viewBox="0 0 26 22"><path d="M8 2 L2 8 L8 14" fill="none" stroke="#c8c8c8" stroke-width="2.6"/><path d="M2 8 H16 a7 7 0 0 1 0 12 H14" fill="none" stroke="#c8c8c8" stroke-width="2.6"/></svg>
<svg style="left:2806px;top:724.0px;" width="26" height="26" viewBox="0 0 26 26"><path d="M13 1 L25 13 L13 25 L1 13Z" fill="none" stroke="#3a3a3a" stroke-width="2"/></svg>
<div style="left:2344px;top:764px;width:496px;height:52px;background:#242424;"></div>
<div style="left:2541px;top:764px;width:2px;height:54px;background:#1b1b1b;"></div>
<div style="left:2751px;top:764px;width:2px;height:54px;background:#1b1b1b;"></div>
<div class="t" style="left:2388px;top:778.6px;font-size:22.5px;color:#c8c8c8;font-weight:400;"><i class="h">上</i><i class="k">オ</i><i class="k">フ</i><i class="k">セ</i><i class="s">ッ</i><i class="k">ト</i></div>
<div style="left:2567px;top:773.0px;width:177px;height:37px;background:#151515;border:2px solid #2b2b2b;border-radius:6px;"></div>
<div class="t" style="left:2581px;top:777.8px;font-size:24px;color:#e0e0e0;font-weight:400;">121.393806</div>
<svg style="left:2767px;top:780.0px;" width="26" height="22" viewBox="0 0 26 22"><path d="M8 2 L2 8 L8 14" fill="none" stroke="#c8c8c8" stroke-width="2.6"/><path d="M2 8 H16 a7 7 0 0 1 0 12 H14" fill="none" stroke="#c8c8c8" stroke-width="2.6"/></svg>
<svg style="left:2806px;top:778.0px;" width="26" height="26" viewBox="0 0 26 26"><path d="M13 1 L25 13 L13 25 L1 13Z" fill="none" stroke="#3a3a3a" stroke-width="2"/></svg>
<div style="left:2344px;top:818px;width:496px;height:52px;background:#242424;"></div>
<div style="left:2541px;top:818px;width:2px;height:54px;background:#1b1b1b;"></div>
<div style="left:2751px;top:818px;width:2px;height:54px;background:#1b1b1b;"></div>
<div class="t" style="left:2388px;top:832.6px;font-size:22.5px;color:#c8c8c8;font-weight:400;"><i class="h">右</i><i class="k">オ</i><i class="k">フ</i><i class="k">セ</i><i class="s">ッ</i><i class="k">ト</i></div>
<div style="left:2567px;top:827.0px;width:177px;height:37px;background:#151515;border:2px solid #2b2b2b;border-radius:6px;"></div>
<div class="t" style="left:2581px;top:831.8px;font-size:24px;color:#e0e0e0;font-weight:400;">6.633691</div>
<svg style="left:2767px;top:834.0px;" width="26" height="22" viewBox="0 0 26 22"><path d="M8 2 L2 8 L8 14" fill="none" stroke="#c8c8c8" stroke-width="2.6"/><path d="M2 8 H16 a7 7 0 0 1 0 12 H14" fill="none" stroke="#c8c8c8" stroke-width="2.6"/></svg>
<svg style="left:2806px;top:832.0px;" width="26" height="26" viewBox="0 0 26 26"><path d="M13 1 L25 13 L13 25 L1 13Z" fill="none" stroke="#3a3a3a" stroke-width="2"/></svg>
<div style="left:2344px;top:872px;width:496px;height:52px;background:#242424;"></div>
<div style="left:2541px;top:872px;width:2px;height:54px;background:#1b1b1b;"></div>
<div style="left:2751px;top:872px;width:2px;height:54px;background:#1b1b1b;"></div>
<div class="t" style="left:2388px;top:886.6px;font-size:22.5px;color:#c8c8c8;font-weight:400;"><i class="h">下</i><i class="k">オ</i><i class="k">フ</i><i class="k">セ</i><i class="s">ッ</i><i class="k">ト</i></div>
<div style="left:2567px;top:881.0px;width:177px;height:37px;background:#151515;border:2px solid #2b2b2b;border-radius:6px;"></div>
<div class="t" style="left:2581px;top:885.8px;font-size:24px;color:#e0e0e0;font-weight:400;">186.270874</div>
<svg style="left:2767px;top:888.0px;" width="26" height="22" viewBox="0 0 26 22"><path d="M8 2 L2 8 L8 14" fill="none" stroke="#c8c8c8" stroke-width="2.6"/><path d="M2 8 H16 a7 7 0 0 1 0 12 H14" fill="none" stroke="#c8c8c8" stroke-width="2.6"/></svg>
<svg style="left:2806px;top:886.0px;" width="26" height="26" viewBox="0 0 26 26"><path d="M13 1 L25 13 L13 25 L1 13Z" fill="none" stroke="#3a3a3a" stroke-width="2"/></svg>
<div style="left:2344px;top:926px;width:496px;height:52px;background:#242424;"></div>
<div style="left:2541px;top:926px;width:2px;height:54px;background:#1b1b1b;"></div>
<div style="left:2751px;top:926px;width:2px;height:54px;background:#1b1b1b;"></div>
<svg style="left:2357px;top:943px;" width="14" height="20" viewBox="0 0 14 20"><path d="M1 1 L13 10 L1 19Z" fill="#8a8a8a"/></svg>
<div class="t" style="left:2388px;top:939.8px;font-size:24px;color:#c8c8c8;font-weight:400;transform:scaleX(0.92);transform-origin:left;">Alignment</div>
<div style="left:2567px;top:935.0px;width:85px;height:37px;background:#151515;border:2px solid #2b2b2b;border-radius:6px;"></div>
<div class="t" style="left:2581px;top:939.8px;font-size:24px;color:#e0e0e0;font-weight:400;">0.0</div>
<div style="left:2660px;top:935.0px;width:84px;height:37px;background:#151515;border:2px solid #2b2b2b;border-radius:6px;"></div>
<div class="t" style="left:2674px;top:939.8px;font-size:24px;color:#e0e0e0;font-weight:400;">0.0</div>
<svg style="left:2806px;top:940.0px;" width="26" height="26" viewBox="0 0 26 26"><path d="M13 1 L25 13 L13 25 L1 13Z" fill="none" stroke="#3a3a3a" stroke-width="2"/></svg>
<div style="left:2344px;top:980px;width:496px;height:52px;background:#242424;"></div>
<div style="left:2541px;top:980px;width:2px;height:54px;background:#1b1b1b;"></div>
<div style="left:2751px;top:980px;width:2px;height:54px;background:#1b1b1b;"></div>
<div class="t" style="left:2388px;top:993.8px;font-size:24px;color:#c8c8c8;font-weight:400;transform:scaleX(0.92);transform-origin:left;">Size To Content</div>
<div style="left:2567px;top:990.0px;width:34px;height:34px;background:#151515;border:2px solid #2b2b2b;border-radius:4px;"></div>
<svg style="left:2806px;top:994.0px;" width="26" height="26" viewBox="0 0 26 26"><path d="M13 1 L25 13 L13 25 L1 13Z" fill="none" stroke="#3a3a3a" stroke-width="2"/></svg>
<div style="left:2344px;top:1034px;width:496px;height:52px;background:#242424;"></div>
<div style="left:2541px;top:1034px;width:2px;height:54px;background:#1b1b1b;"></div>
<div style="left:2751px;top:1034px;width:2px;height:54px;background:#1b1b1b;"></div>
<div class="t" style="left:2388px;top:1047.8px;font-size:24px;color:#c8c8c8;font-weight:400;transform:scaleX(0.92);transform-origin:left;">ZOrder</div>
<div style="left:2567px;top:1043.0px;width:177px;height:37px;background:#151515;border:2px solid #2b2b2b;border-radius:6px;"></div>
<div class="t" style="left:2581px;top:1047.8px;font-size:24px;color:#e0e0e0;font-weight:400;">0</div>
<svg style="left:2806px;top:1048.0px;" width="26" height="26" viewBox="0 0 26 26"><path d="M13 1 L25 13 L13 25 L1 13Z" fill="none" stroke="#3a3a3a" stroke-width="2"/></svg>
<div style="left:2344px;top:1088px;width:496px;height:52px;background:#333333;"></div>
<svg style="left:2354px;top:1108px;" width="22" height="14" viewBox="0 0 22 14"><path d="M1 1 H21 L11 13Z" fill="#8a8a8a"/></svg>
<div class="t" style="left:2386px;top:1102.9px;font-size:22px;color:#d2d2d2;font-weight:700;"><i class="k">フ</i><i class="s">ィ</i><i class="k">ル</i> <i class="k">ル</i><i class="h">ー</i><i class="k">ル</i></div>
<div style="left:2344px;top:1142px;width:496px;height:52px;background:#242424;"></div>
<div style="left:2541px;top:1142px;width:2px;height:54px;background:#1b1b1b;"></div>
<div style="left:2751px;top:1142px;width:2px;height:54px;background:#1b1b1b;"></div>
<svg style="left:2354px;top:1162px;" width="22" height="14" viewBox="0 0 22 14"><path d="M1 1 H21 L11 13Z" fill="#8a8a8a"/></svg>
<div class="t" style="left:2388px;top:1155.8px;font-size:24px;color:#c8c8c8;font-weight:400;transform:scaleX(0.92);transform-origin:left;">Column Fill</div>
<div class="t" style="left:2567px;top:1156.9px;font-size:22px;color:#c0c0c0;font-weight:400;">3 <i class="h">配</i><i class="h">列</i><i class="p">ｴ</i></div>
<svg style="left:2652px;top:1153px;" width="32" height="32" viewBox="0 0 32 32"><circle cx="16" cy="16" r="13.5" fill="none" stroke="#cfcfcf" stroke-width="2.6"/><path d="M16 9 V23 M9 16 H23" stroke="#cfcfcf" stroke-width="2.8"/></svg>
<svg style="left:2706px;top:1153px;" width="28" height="32" viewBox="0 0 28 32"><path d="M2 6 H26 M10 6 V2 H18 V6" fill="none" stroke="#cfcfcf" stroke-width="3"/><path d="M5 9 L7 30 H21 L23 9" fill="none" stroke="#cfcfcf" stroke-width="3.5"/></svg>
<svg style="left:2806px;top:1158.0px;" width="26" height="22" viewBox="0 0 26 22"><path d="M8 2 L2 8 L8 14" fill="none" stroke="#c8c8c8" stroke-width="2.6"/><path d="M2 8 H16 a7 7 0 0 1 0 12 H14" fill="none" stroke="#c8c8c8" stroke-width="2.6"/></svg>
<div style="left:2344px;top:1196px;width:496px;height:56px;background:#242424;"></div>
<div style="left:2541px;top:1196px;width:2px;height:58px;background:#1b1b1b;"></div>
<div style="left:2751px;top:1196px;width:2px;height:58px;background:#1b1b1b;"></div>
<div style="left:2344px;top:1196px;width:32px;height:58px;background:#1e1e1e;"></div>
<div style="left:2376px;top:1196px;width:2px;height:58px;background:#1b1b1b;"></div>
<div class="t" style="right:344px;top:1212.3px;font-size:23px;color:#8e8e8e;font-weight:400;"><i class="k">イ</i><i class="k">ン</i><i class="k">デ</i><i class="s">ッ</i><i class="k">ク</i><i class="k">ス</i></div>
<div style="left:2567px;top:1206.0px;width:107px;height:38px;background:#151515;border:2px solid #2b2b2b;border-radius:6px;"></div>
<div class="t" style="left:2581px;top:1211.8px;font-size:24px;color:#e0e0e0;font-weight:400;">0.0</div>
<svg style="left:2702px;top:1219px;" width="22" height="14" viewBox="0 0 22 14"><path d="M2 3 L11 11 L20 3" stroke="#d2d2d2" stroke-width="3" fill="none"/></svg>
<svg style="left:2806px;top:1214.0px;" width="26" height="22" viewBox="0 0 26 22"><path d="M8 2 L2 8 L8 14" fill="none" stroke="#c8c8c8" stroke-width="2.6"/><path d="M2 8 H16 a7 7 0 0 1 0 12 H14" fill="none" stroke="#c8c8c8" stroke-width="2.6"/></svg>
<div style="left:2344px;top:1254px;width:496px;height:56px;background:#242424;"></div>
<div style="left:2541px;top:1254px;width:2px;height:58px;background:#1b1b1b;"></div>
<div style="left:2751px;top:1254px;width:2px;height:58px;background:#1b1b1b;"></div>
<div style="left:2344px;top:1254px;width:32px;height:58px;background:#1e1e1e;"></div>
<div style="left:2376px;top:1254px;width:2px;height:58px;background:#1b1b1b;"></div>
<div class="t" style="right:344px;top:1270.3px;font-size:23px;color:#8e8e8e;font-weight:400;"><i class="k">イ</i><i class="k">ン</i><i class="k">デ</i><i class="s">ッ</i><i class="k">ク</i><i class="k">ス</i></div>
<div style="left:2567px;top:1264.0px;width:107px;height:38px;background:#151515;border:2px solid #2b2b2b;border-radius:6px;"></div>
<div class="t" style="left:2581px;top:1269.8px;font-size:24px;color:#e0e0e0;font-weight:400;">1.0</div>
<svg style="left:2702px;top:1277px;" width="22" height="14" viewBox="0 0 22 14"><path d="M2 3 L11 11 L20 3" stroke="#d2d2d2" stroke-width="3" fill="none"/></svg>
<svg style="left:2806px;top:1272.0px;" width="26" height="22" viewBox="0 0 26 22"><path d="M8 2 L2 8 L8 14" fill="none" stroke="#c8c8c8" stroke-width="2.6"/><path d="M2 8 H16 a7 7 0 0 1 0 12 H14" fill="none" stroke="#c8c8c8" stroke-width="2.6"/></svg>
<div style="left:2344px;top:1312px;width:496px;height:56px;background:#242424;"></div>
<div style="left:2541px;top:1312px;width:2px;height:58px;background:#1b1b1b;"></div>
<div style="left:2751px;top:1312px;width:2px;height:58px;background:#1b1b1b;"></div>
<div style="left:2344px;top:1312px;width:32px;height:58px;background:#1e1e1e;"></div>
<div style="left:2376px;top:1312px;width:2px;height:58px;background:#1b1b1b;"></div>
<div class="t" style="right:344px;top:1328.3px;font-size:23px;color:#8e8e8e;font-weight:400;"><i class="k">イ</i><i class="k">ン</i><i class="k">デ</i><i class="s">ッ</i><i class="k">ク</i><i class="k">ス</i></div>
<div style="left:2567px;top:1322.0px;width:107px;height:38px;background:#151515;border:2px solid #2b2b2b;border-radius:6px;"></div>
<div class="t" style="left:2581px;top:1327.8px;font-size:24px;color:#e0e0e0;font-weight:400;">0.0</div>
<svg style="left:2702px;top:1335px;" width="22" height="14" viewBox="0 0 22 14"><path d="M2 3 L11 11 L20 3" stroke="#d2d2d2" stroke-width="3" fill="none"/></svg>
<svg style="left:2806px;top:1330.0px;" width="26" height="22" viewBox="0 0 26 22"><path d="M8 2 L2 8 L8 14" fill="none" stroke="#c8c8c8" stroke-width="2.6"/><path d="M2 8 H16 a7 7 0 0 1 0 12 H14" fill="none" stroke="#c8c8c8" stroke-width="2.6"/></svg>
<div style="left:2344px;top:1370px;width:496px;height:52px;background:#242424;"></div>
<div style="left:2541px;top:1370px;width:2px;height:54px;background:#1b1b1b;"></div>
<div style="left:2751px;top:1370px;width:2px;height:54px;background:#1b1b1b;"></div>
<svg style="left:2354px;top:1390px;" width="22" height="14" viewBox="0 0 22 14"><path d="M1 1 H21 L11 13Z" fill="#8a8a8a"/></svg>
<div class="t" style="left:2388px;top:1383.8px;font-size:24px;color:#c8c8c8;font-weight:400;transform:scaleX(0.92);transform-origin:left;">Row Fill</div>
<div class="t" style="left:2567px;top:1384.9px;font-size:22px;color:#c0c0c0;font-weight:400;">1 <i class="h">配</i><i class="h">列</i><i class="p">ｴ</i></div>
<svg style="left:2652px;top:1381px;" width="32" height="32" viewBox="0 0 32 32"><circle cx="16" cy="16" r="13.5" fill="none" stroke="#cfcfcf" stroke-width="2.6"/><path d="M16 9 V23 M9 16 H23" stroke="#cfcfcf" stroke-width="2.8"/></svg>
<svg style="left:2706px;top:1381px;" width="28" height="32" viewBox="0 0 28 32"><path d="M2 6 H26 M10 6 V2 H18 V6" fill="none" stroke="#cfcfcf" stroke-width="3"/><path d="M5 9 L7 30 H21 L23 9" fill="none" stroke="#cfcfcf" stroke-width="3.5"/></svg>
<svg style="left:2806px;top:1386.0px;" width="26" height="22" viewBox="0 0 26 22"><path d="M8 2 L2 8 L8 14" fill="none" stroke="#c8c8c8" stroke-width="2.6"/><path d="M2 8 H16 a7 7 0 0 1 0 12 H14" fill="none" stroke="#c8c8c8" stroke-width="2.6"/></svg>
<div style="left:2344px;top:1424px;width:496px;height:56px;background:#242424;"></div>
<div style="left:2541px;top:1424px;width:2px;height:58px;background:#1b1b1b;"></div>
<div style="left:2751px;top:1424px;width:2px;height:58px;background:#1b1b1b;"></div>
<div style="left:2344px;top:1424px;width:32px;height:58px;background:#1e1e1e;"></div>
<div style="left:2376px;top:1424px;width:2px;height:58px;background:#1b1b1b;"></div>
<div class="t" style="right:344px;top:1440.3px;font-size:23px;color:#8e8e8e;font-weight:400;"><i class="k">イ</i><i class="k">ン</i><i class="k">デ</i><i class="s">ッ</i><i class="k">ク</i><i class="k">ス</i></div>
<div style="left:2567px;top:1434.0px;width:107px;height:38px;background:#151515;border:2px solid #2b2b2b;border-radius:6px;"></div>
<div class="t" style="left:2581px;top:1439.8px;font-size:24px;color:#e0e0e0;font-weight:400;">1.0</div>
<svg style="left:2702px;top:1447px;" width="22" height="14" viewBox="0 0 22 14"><path d="M2 3 L11 11 L20 3" stroke="#d2d2d2" stroke-width="3" fill="none"/></svg>
<svg style="left:2806px;top:1442.0px;" width="26" height="22" viewBox="0 0 26 22"><path d="M8 2 L2 8 L8 14" fill="none" stroke="#c8c8c8" stroke-width="2.6"/><path d="M2 8 H16 a7 7 0 0 1 0 12 H14" fill="none" stroke="#c8c8c8" stroke-width="2.6"/></svg>
<div style="left:2344px;top:1482px;width:496px;height:52px;background:#333333;"></div>
<svg style="left:2354px;top:1502px;" width="22" height="14" viewBox="0 0 22 14"><path d="M1 1 H21 L11 13Z" fill="#8a8a8a"/></svg>
<div class="t" style="left:2386px;top:1496.9px;font-size:22px;color:#d2d2d2;font-weight:700;"><i class="k">ア</i><i class="k">ク</i><i class="k">セ</i><i class="k">シ</i><i class="k">ビ</i><i class="k">リ</i><i class="k">テ</i><i class="s">ィ</i></div>
<div style="left:2344px;top:1536px;width:496px;height:52px;background:#242424;"></div>
<div style="left:2541px;top:1536px;width:2px;height:54px;background:#1b1b1b;"></div>
<div style="left:2751px;top:1536px;width:2px;height:54px;background:#1b1b1b;"></div>
<div class="t" style="left:2388px;top:1549.8px;font-size:24px;color:#c8c8c8;font-weight:400;transform:scaleX(0.92);transform-origin:left;">Override Acce...</div>
<div style="left:2567px;top:1546px;width:34px;height:34px;background:#151515;border:2px solid #2b2b2b;border-radius:4px;"></div>
<div style="left:2344px;top:1590px;width:496px;height:52px;background:#242424;"></div>
<div style="left:2541px;top:1590px;width:2px;height:54px;background:#1b1b1b;"></div>
<div style="left:2751px;top:1590px;width:2px;height:54px;background:#1b1b1b;"></div>
<div class="t" style="left:2388px;top:1603.8px;font-size:24px;color:#7a7a7a;font-weight:400;transform:scaleX(0.92);transform-origin:left;">Can Children b...</div>
<div style="left:2567px;top:1600px;width:34px;height:34px;background:#1a1a1a;border:2px solid #262626;border-radius:4px;"></div>
<svg style="left:2572px;top:1606px;" width="24" height="22" viewBox="0 0 24 22"><path d="M3 11 L9 17 L21 4" fill="none" stroke="#2f5aa8" stroke-width="3.5"/></svg>
<div style="left:2344px;top:1644px;width:496px;height:54px;background:#242424;"></div>
<div style="left:2541px;top:1644px;width:2px;height:56px;background:#1b1b1b;"></div>
<div style="left:2751px;top:1644px;width:2px;height:56px;background:#1b1b1b;"></div>
<div style="left:2567px;top:1650px;width:177px;height:40px;background:#333333;border-radius:6px;"></div>
<div style="left:2344px;top:1663px;width:528px;height:10px;background:#1b1b1b;"></div>
<div style="left:2840px;top:602px;width:32px;height:1061px;background:#1f1f1f;"></div>
<div style="left:2849px;top:606px;width:15px;height:468px;background:#4b4b4b;border-radius:8px;"></div>
<div style="left:0px;top:1673px;width:2874px;height:65px;background:#262626;"></div>
<div style="left:310px;top:1673px;width:4px;height:65px;background:#1a1a1a;"></div>
<div style="left:565px;top:1673px;width:4px;height:65px;background:#1a1a1a;"></div>
<div style="left:752px;top:1673px;width:4px;height:65px;background:#1a1a1a;"></div>
<div style="left:2188px;top:1673px;width:4px;height:65px;background:#1a1a1a;"></div>
<div style="left:2466px;top:1673px;width:4px;height:65px;background:#1a1a1a;"></div>
<svg style="left:20px;top:1690px;" width="36" height="34" viewBox="0 0 36 34"><path d="M0 4 H10 L13 7 H26 V30 H0Z" fill="#b8b8b8"/><path d="M0 4 H10 L13 7 H0Z" fill="#7a7a7a"/><circle cx="24" cy="22" r="7" fill="#262626" stroke="#d8d8d8" stroke-width="2.5"/><path d="M19 27 L14 33" stroke="#d8d8d8" stroke-width="3"/></svg>
<div class="t" style="left:62px;top:1690.2px;font-size:27px;color:#d2d2d2;font-weight:400;"><i class="k">コ</i><i class="k">ン</i><i class="k">テ</i><i class="k">ン</i><i class="k">ツ</i> <i class="k">ド</i><i class="k">ロ</i><i class="k">ワ</i><i class="h">ー</i></div>
<svg style="left:335px;top:1690px;" width="34" height="32" viewBox="0 0 34 32"><path d="M2 10 L30 4 L31 9 L3 15Z" fill="#9a9a9a"/><rect x="2" y="16" width="30" height="16" fill="#b0b0b0"/><rect x="4" y="24" width="12" height="6" fill="#262626"/><rect x="18" y="24" width="12" height="6" fill="#262626"/></svg>
<div class="t" style="left:375px;top:1690.2px;font-size:27px;color:#d2d2d2;font-weight:400;"><i class="k">ア</i><i class="k">ニ</i><i class="k">メ</i><i class="h">ー</i><i class="k">シ</i><i class="s">ョ</i><i class="k">ン</i></div>
<svg style="left:590px;top:1688px;" width="28" height="36" viewBox="0 0 28 36"><rect x="2" y="6" width="24" height="30" rx="2" fill="#c8c8c8"/><rect x="7" y="2" width="4" height="8" fill="#c8c8c8"/><rect x="17" y="2" width="4" height="8" fill="#c8c8c8"/><path d="M7 18 L12 22 L7 26 M13 28 H20" stroke="#262626" stroke-width="2.5" fill="none"/></svg>
<div class="t" style="left:631px;top:1690.2px;font-size:27px;color:#d2d2d2;font-weight:400;"><i class="h">出</i><i class="h">力</i><i class="k">ロ</i><i class="k">グ</i></div>
<svg style="left:784px;top:1693px;" width="32" height="26" viewBox="0 0 32 26"><rect x="1.5" y="1.5" width="29" height="23" fill="none" stroke="#cfcfcf" stroke-width="2.5"/><path d="M7 9 L12 13 L7 17 M14 19 H22" stroke="#cfcfcf" stroke-width="2.5" fill="none"/></svg>
<div class="t" style="left:826px;top:1690.2px;font-size:27px;color:#d2d2d2;font-weight:400;transform:scaleX(0.92);transform-origin:left;">Cmd</div>
<svg style="left:895px;top:1700px;" width="20" height="14" viewBox="0 0 20 14"><path d="M2 3 L10 11 L18 3" stroke="#d2d2d2" stroke-width="3" fill="none"/></svg>
<div style="left:942px;top:1685px;width:598px;height:43px;background:#151515;border:2px solid #2c2c2c;border-radius:6px;"></div>
<div class="t" style="left:958px;top:1690.2px;font-size:25px;color:#5e5e5e;font-weight:400;"><i class="k">コ</i><i class="k">ン</i><i class="k">ソ</i><i class="h">ー</i><i class="k">ル</i><i class="k">コ</i><i class="k">マ</i><i class="k">ン</i><i class="k">ド</i><i class="g">を</i><i class="h">入</i><i class="h">力</i><i class="g">し</i><i class="g">ま</i><i class="g">す</i></div>
<svg style="left:2214px;top:1690px;" width="34" height="34" viewBox="0 0 34 34"><path d="M0 0 H20 L26 6 V30 H0Z" fill="#c0c0c0"/><rect x="5" y="0" width="13" height="9" fill="#8a8a8a"/><rect x="4" y="14" width="18" height="14" fill="#e0e0e0"/><path d="M14 24 L20 30 L32 18" stroke="#262626" stroke-width="6" fill="none"/><path d="M14 24 L20 30 L32 18" stroke="#d8d8d8" stroke-width="3" fill="none"/></svg>
<div class="t" style="left:2258px;top:1690.2px;font-size:27px;color:#d2d2d2;font-weight:400;"><i class="g">す</i><i class="g">べ</i><i class="g">て</i><i class="h">保</i><i class="h">存</i><i class="h">済</i><i class="g">み</i></div>
<svg style="left:2498px;top:1688px;" width="28" height="36" viewBox="0 0 28 36"><circle cx="6" cy="6" r="4.5" fill="none" stroke="#d0d0d0" stroke-width="3"/><circle cx="22" cy="8" r="4.5" fill="none" stroke="#d0d0d0" stroke-width="3"/><circle cx="6" cy="30" r="4.5" fill="none" stroke="#d0d0d0" stroke-width="3"/><path d="M6 11 V25 M22 13 Q22 20 8 25" stroke="#d0d0d0" stroke-width="3" fill="none"/></svg>
<div class="t" style="left:2540px;top:1690.2px;font-size:27px;color:#d2d2d2;font-weight:400;"><i class="k">リ</i><i class="k">ビ</i><i class="k">ジ</i><i class="s">ョ</i><i class="k">ン</i><i class="k">コ</i><i class="k">ン</i><i class="k">ト</i><i class="k">ロ</i><i class="h">ー</i><i class="k">ル</i></div>
<svg style="left:2827px;top:1699px;" width="20" height="14" viewBox="0 0 20 14"><path d="M2 3 L10 11 L18 3" stroke="#d2d2d2" stroke-width="3" fill="none"/></svg>
<svg style="left:0px;top:0px;" width="20" height="20" viewBox="0 0 20 20"><path d="M0 0 H20 A20 20 0 0 0 0 20 Z" fill="#000"/></svg>
<svg style="left:2860px;top:0px;transform:scaleX(-1);" width="20" height="20" viewBox="0 0 20 20"><path d="M0 0 H20 A20 20 0 0 0 0 20 Z" fill="#000"/></svg>
<svg style="left:0px;top:1718px;transform:scaleY(-1);" width="20" height="20" viewBox="0 0 20 20"><path d="M0 0 H20 A20 20 0 0 0 0 20 Z" fill="#000"/></svg>
<svg style="left:2860px;top:1718px;transform:scale(-1,-1);" width="20" height="20" viewBox="0 0 20 20"><path d="M0 0 H20 A20 20 0 0 0 0 20 Z" fill="#000"/></svg>
</body></html>
